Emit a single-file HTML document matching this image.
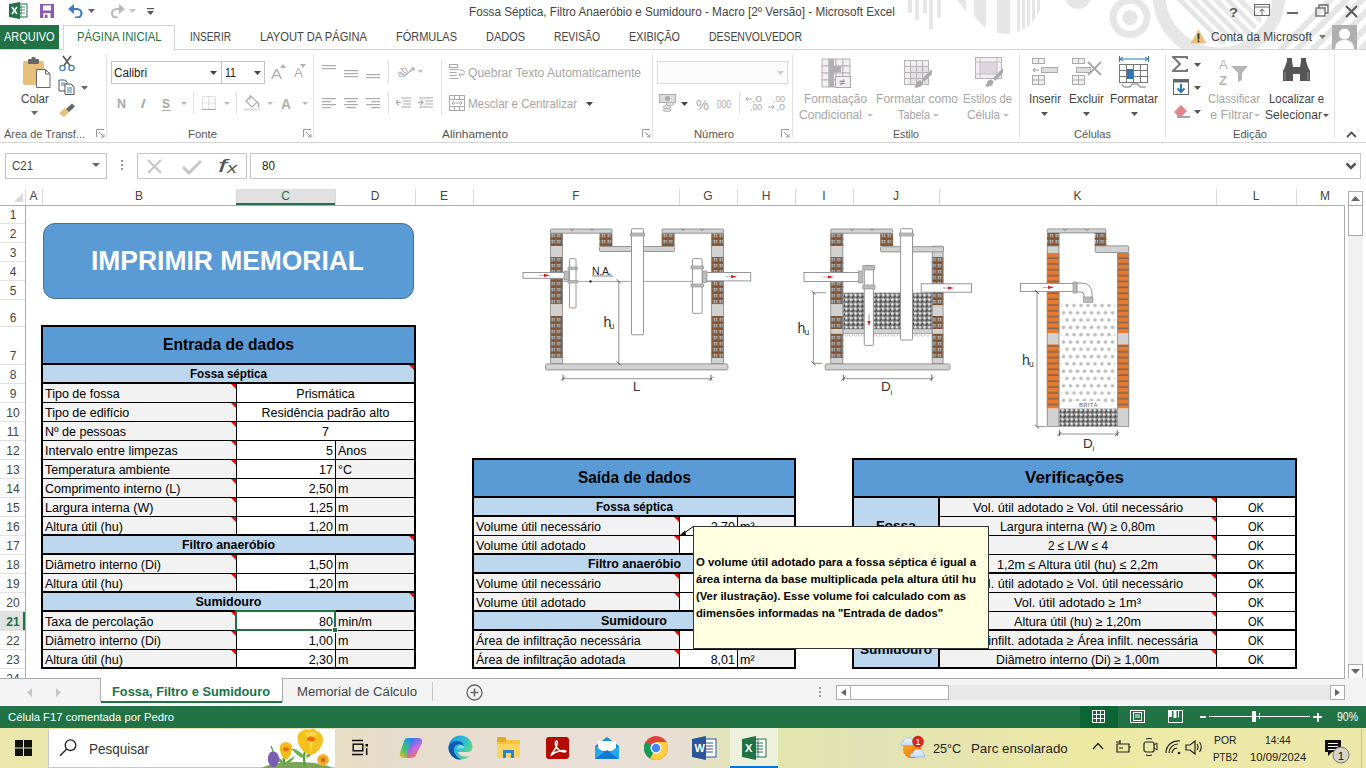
<!DOCTYPE html>
<html><head><meta charset="utf-8"><style>
*{margin:0;padding:0}
html,body{width:1366px;height:768px;overflow:hidden;background:#fff}
body{position:relative;font-family:"Liberation Sans",sans-serif}
.t{position:absolute;white-space:nowrap}
.r{position:absolute;display:block}
</style></head><body>
<div class="r" style="left:0px;top:189px;width:1366px;height:16px;background:#fff;"></div>
<svg class="r" style="left:14px;top:193px;" width="9" height="9" viewBox="0 0 9 9"><polygon points="9,0 9,9 0,9" fill="#d9d9d9"/></svg>
<div class="r" style="left:236px;top:189px;width:99px;height:16px;background:#e1e1e1;"></div>
<div class="r" style="left:42px;top:189px;width:1px;height:16px;background:#dadada;"></div>
<div class="t" style="left:29.50px;top:190.44px;font-size:12px;line-height:13.800px;color:#444;">A</div>
<div class="r" style="left:236px;top:189px;width:1px;height:16px;background:#dadada;"></div>
<div class="t" style="left:135.00px;top:190.44px;font-size:12px;line-height:13.800px;color:#444;">B</div>
<div class="r" style="left:335px;top:189px;width:1px;height:16px;background:#dadada;"></div>
<div class="t" style="left:281.17px;top:190.44px;font-size:12px;line-height:13.800px;color:#217346;">C</div>
<div class="r" style="left:415px;top:189px;width:1px;height:16px;background:#dadada;"></div>
<div class="t" style="left:370.67px;top:190.44px;font-size:12px;line-height:13.800px;color:#444;">D</div>
<div class="r" style="left:473px;top:189px;width:1px;height:16px;background:#dadada;"></div>
<div class="t" style="left:440.00px;top:190.44px;font-size:12px;line-height:13.800px;color:#444;">E</div>
<div class="r" style="left:679px;top:189px;width:1px;height:16px;background:#dadada;"></div>
<div class="t" style="left:572.33px;top:190.44px;font-size:12px;line-height:13.800px;color:#444;">F</div>
<div class="r" style="left:737px;top:189px;width:1px;height:16px;background:#dadada;"></div>
<div class="t" style="left:703.33px;top:190.44px;font-size:12px;line-height:13.800px;color:#444;">G</div>
<div class="r" style="left:795px;top:189px;width:1px;height:16px;background:#dadada;"></div>
<div class="t" style="left:761.67px;top:190.44px;font-size:12px;line-height:13.800px;color:#444;">H</div>
<div class="r" style="left:853px;top:189px;width:1px;height:16px;background:#dadada;"></div>
<div class="t" style="left:822.33px;top:190.44px;font-size:12px;line-height:13.800px;color:#444;">I</div>
<div class="r" style="left:939px;top:189px;width:1px;height:16px;background:#dadada;"></div>
<div class="t" style="left:893.00px;top:190.44px;font-size:12px;line-height:13.800px;color:#444;">J</div>
<div class="r" style="left:1216px;top:189px;width:1px;height:16px;background:#dadada;"></div>
<div class="t" style="left:1073.50px;top:190.44px;font-size:12px;line-height:13.800px;color:#444;">K</div>
<div class="r" style="left:1296px;top:189px;width:1px;height:16px;background:#dadada;"></div>
<div class="t" style="left:1252.66px;top:190.44px;font-size:12px;line-height:13.800px;color:#444;">L</div>
<div class="t" style="left:1320.00px;top:190.44px;font-size:12px;line-height:13.800px;color:#444;">M</div>
<div class="r" style="left:25px;top:189px;width:1px;height:16px;background:#dadada;"></div>
<div class="r" style="left:0px;top:205px;width:1345px;height:1px;background:#ababab;"></div>
<div class="r" style="left:236px;top:203px;width:99px;height:2px;background:#217346;"></div>
<div class="r" style="left:25px;top:205px;width:1px;height:473px;background:#ababab;"></div>
<div class="r" style="left:0px;top:611px;width:25px;height:19px;background:#e1e1e1;"></div>
<div class="r" style="left:23px;top:611px;width:2px;height:19px;background:#217346;"></div>
<div class="r" style="left:0px;top:223px;width:25px;height:1px;background:#e1e1e1;"></div>
<div class="t" style="left:9.66px;top:208.94px;font-size:12px;line-height:13.800px;color:#444;">1</div>
<div class="r" style="left:0px;top:242px;width:25px;height:1px;background:#e1e1e1;"></div>
<div class="t" style="left:9.66px;top:227.94px;font-size:12px;line-height:13.800px;color:#444;">2</div>
<div class="r" style="left:0px;top:261px;width:25px;height:1px;background:#e1e1e1;"></div>
<div class="t" style="left:9.66px;top:246.94px;font-size:12px;line-height:13.800px;color:#444;">3</div>
<div class="r" style="left:0px;top:280px;width:25px;height:1px;background:#e1e1e1;"></div>
<div class="t" style="left:9.66px;top:265.94px;font-size:12px;line-height:13.800px;color:#444;">4</div>
<div class="r" style="left:0px;top:299px;width:25px;height:1px;background:#e1e1e1;"></div>
<div class="t" style="left:9.66px;top:284.94px;font-size:12px;line-height:13.800px;color:#444;">5</div>
<div class="r" style="left:0px;top:326px;width:25px;height:1px;background:#e1e1e1;"></div>
<div class="t" style="left:9.66px;top:311.94px;font-size:12px;line-height:13.800px;color:#444;">6</div>
<div class="r" style="left:0px;top:364px;width:25px;height:1px;background:#e1e1e1;"></div>
<div class="t" style="left:9.66px;top:349.94px;font-size:12px;line-height:13.800px;color:#444;">7</div>
<div class="r" style="left:0px;top:383px;width:25px;height:1px;background:#e1e1e1;"></div>
<div class="t" style="left:9.66px;top:368.94px;font-size:12px;line-height:13.800px;color:#444;">8</div>
<div class="r" style="left:0px;top:402px;width:25px;height:1px;background:#e1e1e1;"></div>
<div class="t" style="left:9.66px;top:387.94px;font-size:12px;line-height:13.800px;color:#444;">9</div>
<div class="r" style="left:0px;top:421px;width:25px;height:1px;background:#e1e1e1;"></div>
<div class="t" style="left:6.33px;top:406.94px;font-size:12px;line-height:13.800px;color:#444;">10</div>
<div class="r" style="left:0px;top:440px;width:25px;height:1px;background:#e1e1e1;"></div>
<div class="t" style="left:6.77px;top:425.94px;font-size:12px;line-height:13.800px;color:#444;">11</div>
<div class="r" style="left:0px;top:459px;width:25px;height:1px;background:#e1e1e1;"></div>
<div class="t" style="left:6.33px;top:444.94px;font-size:12px;line-height:13.800px;color:#444;">12</div>
<div class="r" style="left:0px;top:478px;width:25px;height:1px;background:#e1e1e1;"></div>
<div class="t" style="left:6.33px;top:463.94px;font-size:12px;line-height:13.800px;color:#444;">13</div>
<div class="r" style="left:0px;top:497px;width:25px;height:1px;background:#e1e1e1;"></div>
<div class="t" style="left:6.33px;top:482.94px;font-size:12px;line-height:13.800px;color:#444;">14</div>
<div class="r" style="left:0px;top:516px;width:25px;height:1px;background:#e1e1e1;"></div>
<div class="t" style="left:6.33px;top:501.94px;font-size:12px;line-height:13.800px;color:#444;">15</div>
<div class="r" style="left:0px;top:535px;width:25px;height:1px;background:#e1e1e1;"></div>
<div class="t" style="left:6.33px;top:520.94px;font-size:12px;line-height:13.800px;color:#444;">16</div>
<div class="r" style="left:0px;top:554px;width:25px;height:1px;background:#e1e1e1;"></div>
<div class="t" style="left:6.33px;top:539.94px;font-size:12px;line-height:13.800px;color:#444;">17</div>
<div class="r" style="left:0px;top:573px;width:25px;height:1px;background:#e1e1e1;"></div>
<div class="t" style="left:6.33px;top:558.94px;font-size:12px;line-height:13.800px;color:#444;">18</div>
<div class="r" style="left:0px;top:592px;width:25px;height:1px;background:#e1e1e1;"></div>
<div class="t" style="left:6.33px;top:577.94px;font-size:12px;line-height:13.800px;color:#444;">19</div>
<div class="r" style="left:0px;top:611px;width:25px;height:1px;background:#e1e1e1;"></div>
<div class="t" style="left:6.33px;top:596.94px;font-size:12px;line-height:13.800px;color:#444;">20</div>
<div class="r" style="left:0px;top:630px;width:25px;height:1px;background:#e1e1e1;"></div>
<div class="t" style="left:6.33px;top:615.94px;font-size:12px;line-height:13.800px;color:#217346;font-weight:bold;">21</div>
<div class="r" style="left:0px;top:649px;width:25px;height:1px;background:#e1e1e1;"></div>
<div class="t" style="left:6.33px;top:634.94px;font-size:12px;line-height:13.800px;color:#444;">22</div>
<div class="r" style="left:0px;top:668px;width:25px;height:1px;background:#e1e1e1;"></div>
<div class="t" style="left:6.33px;top:653.94px;font-size:12px;line-height:13.800px;color:#444;">23</div>
<div class="r" style="left:0px;top:687px;width:25px;height:1px;background:#e1e1e1;"></div>
<div class="t" style="left:6.33px;top:672.94px;font-size:12px;line-height:13.800px;color:#444;">24</div>
<div class="r" style="left:43px;top:223px;width:371px;height:76px;background:#5b9bd5;border:1px solid #41719c;box-sizing:border-box;border-radius:12px;"></div>
<div class="t" style="left:91.00px;top:246.12px;font-size:27px;line-height:31.050px;color:#fff;font-weight:bold;transform:scaleX(0.9786);transform-origin:0 0;">IMPRIMIR MEMORIAL</div>
<div class="r" style="left:42px;top:326px;width:373px;height:38px;background:#5b9bd5;"></div>
<div class="t" style="left:163.00px;top:336.26px;font-size:16px;line-height:18.400px;color:#000;font-weight:bold;transform:scaleX(0.9758);transform-origin:0 0;">Entrada de dados</div>
<div class="r" style="left:42px;top:364px;width:373px;height:19px;background:#bdd7ee;"></div>
<div class="t" style="left:190.00px;top:366.98px;font-size:12.5px;line-height:14.375px;color:#000;font-weight:bold;transform:scaleX(0.9314);transform-origin:0 0;">Fossa séptica</div>
<svg class="r" style="left:409px;top:365px;" width="5" height="5" viewBox="0 0 5 5"><polygon points="0,0 5,0 5,5" fill="#ff0000"/></svg>
<div class="r" style="left:42px;top:535px;width:373px;height:19px;background:#bdd7ee;"></div>
<div class="t" style="left:182.00px;top:537.98px;font-size:12.5px;line-height:14.375px;color:#000;font-weight:bold;transform:scaleX(0.9847);transform-origin:0 0;">Filtro anaeróbio</div>
<svg class="r" style="left:409px;top:536px;" width="5" height="5" viewBox="0 0 5 5"><polygon points="0,0 5,0 5,5" fill="#ff0000"/></svg>
<div class="r" style="left:42px;top:592px;width:373px;height:19px;background:#bdd7ee;"></div>
<div class="t" style="left:195.50px;top:594.98px;font-size:12.5px;line-height:14.375px;color:#000;font-weight:bold;">Sumidouro</div>
<svg class="r" style="left:409px;top:593px;" width="5" height="5" viewBox="0 0 5 5"><polygon points="0,0 5,0 5,5" fill="#ff0000"/></svg>
<div class="r" style="left:42px;top:383px;width:194px;height:19px;background:#f2f2f2;"></div>
<div class="t" style="left:45.00px;top:386.98px;font-size:12.5px;line-height:14.375px;color:#000;">Tipo de fossa</div>
<div class="t" style="left:296.33px;top:386.98px;font-size:12.5px;line-height:14.375px;color:#000;">Prismática</div>
<div class="r" style="left:42px;top:402px;width:194px;height:19px;background:#f2f2f2;"></div>
<div class="t" style="left:45.00px;top:405.98px;font-size:12.5px;line-height:14.375px;color:#000;">Tipo de edifício</div>
<div class="t" style="left:261.57px;top:405.98px;font-size:12.5px;line-height:14.375px;color:#000;">Residência padrão alto</div>
<div class="r" style="left:42px;top:421px;width:194px;height:19px;background:#f2f2f2;"></div>
<div class="t" style="left:45.00px;top:424.98px;font-size:12.5px;line-height:14.375px;color:#000;">Nº de pessoas</div>
<div class="t" style="left:322.02px;top:424.98px;font-size:12.5px;line-height:14.375px;color:#000;">7</div>
<div class="r" style="left:42px;top:440px;width:194px;height:19px;background:#f2f2f2;"></div>
<div class="t" style="left:45.00px;top:443.98px;font-size:12.5px;line-height:14.375px;color:#000;">Intervalo entre limpezas</div>
<div class="r" style="left:335px;top:440px;width:80px;height:19px;background:#f2f2f2;"></div>
<div class="t" style="left:326.05px;top:443.98px;font-size:12.5px;line-height:14.375px;color:#000;">5</div>
<div class="t" style="left:338.00px;top:443.98px;font-size:12.5px;line-height:14.375px;color:#000;">Anos</div>
<div class="r" style="left:42px;top:459px;width:194px;height:19px;background:#f2f2f2;"></div>
<div class="t" style="left:45.00px;top:462.98px;font-size:12.5px;line-height:14.375px;color:#000;">Temperatura ambiente</div>
<div class="r" style="left:335px;top:459px;width:80px;height:19px;background:#f2f2f2;"></div>
<div class="t" style="left:319.10px;top:462.98px;font-size:12.5px;line-height:14.375px;color:#000;">17</div>
<div class="t" style="left:338.00px;top:462.98px;font-size:12.5px;line-height:14.375px;color:#000;">°C</div>
<div class="r" style="left:42px;top:478px;width:194px;height:19px;background:#f2f2f2;"></div>
<div class="t" style="left:45.00px;top:481.98px;font-size:12.5px;line-height:14.375px;color:#000;">Comprimento interno (L)</div>
<div class="r" style="left:335px;top:478px;width:80px;height:19px;background:#f2f2f2;"></div>
<div class="t" style="left:308.67px;top:481.98px;font-size:12.5px;line-height:14.375px;color:#000;">2,50</div>
<div class="t" style="left:338.00px;top:481.98px;font-size:12.5px;line-height:14.375px;color:#000;">m</div>
<div class="r" style="left:42px;top:497px;width:194px;height:19px;background:#f2f2f2;"></div>
<div class="t" style="left:45.00px;top:500.98px;font-size:12.5px;line-height:14.375px;color:#000;">Largura interna (W)</div>
<div class="r" style="left:335px;top:497px;width:80px;height:19px;background:#f2f2f2;"></div>
<div class="t" style="left:308.67px;top:500.98px;font-size:12.5px;line-height:14.375px;color:#000;">1,25</div>
<div class="t" style="left:338.00px;top:500.98px;font-size:12.5px;line-height:14.375px;color:#000;">m</div>
<div class="r" style="left:42px;top:516px;width:194px;height:19px;background:#f2f2f2;"></div>
<div class="t" style="left:45.00px;top:519.98px;font-size:12.5px;line-height:14.375px;color:#000;">Altura útil (hu)</div>
<div class="r" style="left:335px;top:516px;width:80px;height:19px;background:#f2f2f2;"></div>
<div class="t" style="left:308.67px;top:519.98px;font-size:12.5px;line-height:14.375px;color:#000;">1,20</div>
<div class="t" style="left:338.00px;top:519.98px;font-size:12.5px;line-height:14.375px;color:#000;">m</div>
<div class="r" style="left:42px;top:554px;width:194px;height:19px;background:#f2f2f2;"></div>
<div class="t" style="left:45.00px;top:557.98px;font-size:12.5px;line-height:14.375px;color:#000;">Diâmetro interno (Di)</div>
<div class="r" style="left:335px;top:554px;width:80px;height:19px;background:#f2f2f2;"></div>
<div class="t" style="left:308.67px;top:557.98px;font-size:12.5px;line-height:14.375px;color:#000;">1,50</div>
<div class="t" style="left:338.00px;top:557.98px;font-size:12.5px;line-height:14.375px;color:#000;">m</div>
<div class="r" style="left:42px;top:573px;width:194px;height:19px;background:#f2f2f2;"></div>
<div class="t" style="left:45.00px;top:576.98px;font-size:12.5px;line-height:14.375px;color:#000;">Altura útil (hu)</div>
<div class="r" style="left:335px;top:573px;width:80px;height:19px;background:#f2f2f2;"></div>
<div class="t" style="left:308.67px;top:576.98px;font-size:12.5px;line-height:14.375px;color:#000;">1,20</div>
<div class="t" style="left:338.00px;top:576.98px;font-size:12.5px;line-height:14.375px;color:#000;">m</div>
<div class="r" style="left:42px;top:611px;width:194px;height:19px;background:#f2f2f2;"></div>
<div class="t" style="left:45.00px;top:614.98px;font-size:12.5px;line-height:14.375px;color:#000;">Taxa de percolação</div>
<div class="r" style="left:335px;top:611px;width:80px;height:19px;background:#f2f2f2;"></div>
<div class="t" style="left:319.10px;top:614.98px;font-size:12.5px;line-height:14.375px;color:#000;">80</div>
<div class="t" style="left:338.00px;top:614.98px;font-size:12.5px;line-height:14.375px;color:#000;">min/m</div>
<div class="r" style="left:42px;top:630px;width:194px;height:19px;background:#f2f2f2;"></div>
<div class="t" style="left:45.00px;top:633.98px;font-size:12.5px;line-height:14.375px;color:#000;">Diâmetro interno (Di)</div>
<div class="r" style="left:335px;top:630px;width:80px;height:19px;background:#f2f2f2;"></div>
<div class="t" style="left:308.67px;top:633.98px;font-size:12.5px;line-height:14.375px;color:#000;">1,00</div>
<div class="t" style="left:338.00px;top:633.98px;font-size:12.5px;line-height:14.375px;color:#000;">m</div>
<div class="r" style="left:42px;top:649px;width:194px;height:19px;background:#f2f2f2;"></div>
<div class="t" style="left:45.00px;top:652.98px;font-size:12.5px;line-height:14.375px;color:#000;">Altura útil (hu)</div>
<div class="r" style="left:335px;top:649px;width:80px;height:19px;background:#f2f2f2;"></div>
<div class="t" style="left:308.67px;top:652.98px;font-size:12.5px;line-height:14.375px;color:#000;">2,30</div>
<div class="t" style="left:338.00px;top:652.98px;font-size:12.5px;line-height:14.375px;color:#000;">m</div>
<svg class="r" style="left:231px;top:384px;" width="5" height="5" viewBox="0 0 5 5"><polygon points="0,0 5,0 5,5" fill="#ff0000"/></svg>
<svg class="r" style="left:231px;top:403px;" width="5" height="5" viewBox="0 0 5 5"><polygon points="0,0 5,0 5,5" fill="#ff0000"/></svg>
<svg class="r" style="left:231px;top:422px;" width="5" height="5" viewBox="0 0 5 5"><polygon points="0,0 5,0 5,5" fill="#ff0000"/></svg>
<svg class="r" style="left:231px;top:441px;" width="5" height="5" viewBox="0 0 5 5"><polygon points="0,0 5,0 5,5" fill="#ff0000"/></svg>
<svg class="r" style="left:231px;top:460px;" width="5" height="5" viewBox="0 0 5 5"><polygon points="0,0 5,0 5,5" fill="#ff0000"/></svg>
<svg class="r" style="left:231px;top:479px;" width="5" height="5" viewBox="0 0 5 5"><polygon points="0,0 5,0 5,5" fill="#ff0000"/></svg>
<svg class="r" style="left:231px;top:498px;" width="5" height="5" viewBox="0 0 5 5"><polygon points="0,0 5,0 5,5" fill="#ff0000"/></svg>
<svg class="r" style="left:231px;top:517px;" width="5" height="5" viewBox="0 0 5 5"><polygon points="0,0 5,0 5,5" fill="#ff0000"/></svg>
<svg class="r" style="left:231px;top:555px;" width="5" height="5" viewBox="0 0 5 5"><polygon points="0,0 5,0 5,5" fill="#ff0000"/></svg>
<svg class="r" style="left:231px;top:574px;" width="5" height="5" viewBox="0 0 5 5"><polygon points="0,0 5,0 5,5" fill="#ff0000"/></svg>
<svg class="r" style="left:231px;top:612px;" width="5" height="5" viewBox="0 0 5 5"><polygon points="0,0 5,0 5,5" fill="#ff0000"/></svg>
<svg class="r" style="left:231px;top:631px;" width="5" height="5" viewBox="0 0 5 5"><polygon points="0,0 5,0 5,5" fill="#ff0000"/></svg>
<svg class="r" style="left:231px;top:650px;" width="5" height="5" viewBox="0 0 5 5"><polygon points="0,0 5,0 5,5" fill="#ff0000"/></svg>
<div class="r" style="left:236px;top:383px;width:1px;height:19px;background:#000;"></div>
<div class="r" style="left:236px;top:402px;width:1px;height:19px;background:#000;"></div>
<div class="r" style="left:236px;top:421px;width:1px;height:19px;background:#000;"></div>
<div class="r" style="left:335px;top:440px;width:1px;height:19px;background:#000;"></div>
<div class="r" style="left:236px;top:440px;width:1px;height:19px;background:#000;"></div>
<div class="r" style="left:335px;top:459px;width:1px;height:19px;background:#000;"></div>
<div class="r" style="left:236px;top:459px;width:1px;height:19px;background:#000;"></div>
<div class="r" style="left:335px;top:478px;width:1px;height:19px;background:#000;"></div>
<div class="r" style="left:236px;top:478px;width:1px;height:19px;background:#000;"></div>
<div class="r" style="left:335px;top:497px;width:1px;height:19px;background:#000;"></div>
<div class="r" style="left:236px;top:497px;width:1px;height:19px;background:#000;"></div>
<div class="r" style="left:335px;top:516px;width:1px;height:19px;background:#000;"></div>
<div class="r" style="left:236px;top:516px;width:1px;height:19px;background:#000;"></div>
<div class="r" style="left:335px;top:554px;width:1px;height:19px;background:#000;"></div>
<div class="r" style="left:236px;top:554px;width:1px;height:19px;background:#000;"></div>
<div class="r" style="left:335px;top:573px;width:1px;height:19px;background:#000;"></div>
<div class="r" style="left:236px;top:573px;width:1px;height:19px;background:#000;"></div>
<div class="r" style="left:335px;top:611px;width:1px;height:19px;background:#000;"></div>
<div class="r" style="left:236px;top:611px;width:1px;height:19px;background:#000;"></div>
<div class="r" style="left:335px;top:630px;width:1px;height:19px;background:#000;"></div>
<div class="r" style="left:236px;top:630px;width:1px;height:19px;background:#000;"></div>
<div class="r" style="left:335px;top:649px;width:1px;height:19px;background:#000;"></div>
<div class="r" style="left:236px;top:649px;width:1px;height:19px;background:#000;"></div>
<div class="r" style="left:42px;top:402px;width:373px;height:1px;background:#000;"></div>
<div class="r" style="left:42px;top:421px;width:373px;height:1px;background:#000;"></div>
<div class="r" style="left:42px;top:440px;width:373px;height:1px;background:#000;"></div>
<div class="r" style="left:42px;top:459px;width:373px;height:1px;background:#000;"></div>
<div class="r" style="left:42px;top:478px;width:373px;height:1px;background:#000;"></div>
<div class="r" style="left:42px;top:497px;width:373px;height:1px;background:#000;"></div>
<div class="r" style="left:42px;top:516px;width:373px;height:1px;background:#000;"></div>
<div class="r" style="left:42px;top:573px;width:373px;height:1px;background:#000;"></div>
<div class="r" style="left:42px;top:630px;width:373px;height:1px;background:#000;"></div>
<div class="r" style="left:42px;top:649px;width:373px;height:1px;background:#000;"></div>
<div class="r" style="left:41px;top:325px;width:375px;height:2px;background:#000;"></div>
<div class="r" style="left:41px;top:363px;width:375px;height:2px;background:#000;"></div>
<div class="r" style="left:41px;top:382px;width:375px;height:2px;background:#000;"></div>
<div class="r" style="left:41px;top:534px;width:375px;height:2px;background:#000;"></div>
<div class="r" style="left:41px;top:553px;width:375px;height:2px;background:#000;"></div>
<div class="r" style="left:41px;top:591px;width:375px;height:2px;background:#000;"></div>
<div class="r" style="left:41px;top:610px;width:375px;height:2px;background:#000;"></div>
<div class="r" style="left:41px;top:667px;width:375px;height:2px;background:#000;"></div>
<div class="r" style="left:41px;top:325px;width:2px;height:344px;background:#000;"></div>
<div class="r" style="left:414px;top:325px;width:2px;height:344px;background:#000;"></div>
<div class="r" style="left:235px;top:610px;width:101px;height:21px;border:2px solid #217346;box-sizing:border-box;"></div>
<div class="r" style="left:332px;top:627px;width:6px;height:6px;background:#217346;border:1px solid #fff;box-sizing:border-box;"></div>
<div class="r" style="left:473px;top:459px;width:322px;height:38px;background:#5b9bd5;"></div>
<div class="t" style="left:577.50px;top:469.26px;font-size:16px;line-height:18.400px;color:#000;font-weight:bold;transform:scaleX(0.9628);transform-origin:0 0;">Saída de dados</div>
<div class="r" style="left:473px;top:497px;width:322px;height:19px;background:#bdd7ee;"></div>
<div class="t" style="left:595.50px;top:499.98px;font-size:12.5px;line-height:14.375px;color:#000;font-weight:bold;transform:scaleX(0.9314);transform-origin:0 0;">Fossa séptica</div>
<div class="r" style="left:473px;top:554px;width:322px;height:19px;background:#bdd7ee;"></div>
<div class="t" style="left:587.50px;top:556.98px;font-size:12.5px;line-height:14.375px;color:#000;font-weight:bold;transform:scaleX(0.9847);transform-origin:0 0;">Filtro anaeróbio</div>
<div class="r" style="left:473px;top:611px;width:322px;height:19px;background:#bdd7ee;"></div>
<div class="t" style="left:601.00px;top:613.98px;font-size:12.5px;line-height:14.375px;color:#000;font-weight:bold;">Sumidouro</div>
<div class="r" style="left:473px;top:516px;width:206px;height:19px;background:#f2f2f2;"></div>
<div class="r" style="left:737px;top:516px;width:58px;height:19px;background:#f2f2f2;"></div>
<div class="t" style="left:476.00px;top:519.98px;font-size:12.5px;line-height:14.375px;color:#000;">Volume útil necessário</div>
<div class="t" style="left:710.67px;top:519.98px;font-size:12.5px;line-height:14.375px;color:#000;">2,70</div>
<div class="t" style="left:740.00px;top:519.98px;font-size:12.5px;line-height:14.375px;color:#000;">m³</div>
<svg class="r" style="left:674px;top:517px;" width="5" height="5" viewBox="0 0 5 5"><polygon points="0,0 5,0 5,5" fill="#ff0000"/></svg>
<div class="r" style="left:473px;top:535px;width:206px;height:19px;background:#f2f2f2;"></div>
<div class="r" style="left:737px;top:535px;width:58px;height:19px;background:#f2f2f2;"></div>
<div class="t" style="left:476.00px;top:538.98px;font-size:12.5px;line-height:14.375px;color:#000;">Volume útil adotado</div>
<div class="t" style="left:710.67px;top:538.98px;font-size:12.5px;line-height:14.375px;color:#000;">3,75</div>
<div class="t" style="left:740.00px;top:538.98px;font-size:12.5px;line-height:14.375px;color:#000;">m³</div>
<svg class="r" style="left:674px;top:536px;" width="5" height="5" viewBox="0 0 5 5"><polygon points="0,0 5,0 5,5" fill="#ff0000"/></svg>
<div class="r" style="left:473px;top:573px;width:206px;height:19px;background:#f2f2f2;"></div>
<div class="r" style="left:737px;top:573px;width:58px;height:19px;background:#f2f2f2;"></div>
<div class="t" style="left:476.00px;top:576.98px;font-size:12.5px;line-height:14.375px;color:#000;">Volume útil necessário</div>
<svg class="r" style="left:674px;top:574px;" width="5" height="5" viewBox="0 0 5 5"><polygon points="0,0 5,0 5,5" fill="#ff0000"/></svg>
<div class="r" style="left:473px;top:592px;width:206px;height:19px;background:#f2f2f2;"></div>
<div class="r" style="left:737px;top:592px;width:58px;height:19px;background:#f2f2f2;"></div>
<div class="t" style="left:476.00px;top:595.98px;font-size:12.5px;line-height:14.375px;color:#000;">Volume útil adotado</div>
<svg class="r" style="left:674px;top:593px;" width="5" height="5" viewBox="0 0 5 5"><polygon points="0,0 5,0 5,5" fill="#ff0000"/></svg>
<div class="r" style="left:473px;top:630px;width:206px;height:19px;background:#f2f2f2;"></div>
<div class="r" style="left:737px;top:630px;width:58px;height:19px;background:#f2f2f2;"></div>
<div class="t" style="left:476.00px;top:633.98px;font-size:12.5px;line-height:14.375px;color:#000;">Área de infiltração necessária</div>
<svg class="r" style="left:674px;top:631px;" width="5" height="5" viewBox="0 0 5 5"><polygon points="0,0 5,0 5,5" fill="#ff0000"/></svg>
<div class="r" style="left:473px;top:649px;width:206px;height:19px;background:#f2f2f2;"></div>
<div class="r" style="left:737px;top:649px;width:58px;height:19px;background:#f2f2f2;"></div>
<div class="t" style="left:476.00px;top:652.98px;font-size:12.5px;line-height:14.375px;color:#000;">Área de infiltração adotada</div>
<div class="t" style="left:710.67px;top:652.98px;font-size:12.5px;line-height:14.375px;color:#000;">8,01</div>
<div class="t" style="left:740.00px;top:652.98px;font-size:12.5px;line-height:14.375px;color:#000;">m²</div>
<svg class="r" style="left:674px;top:650px;" width="5" height="5" viewBox="0 0 5 5"><polygon points="0,0 5,0 5,5" fill="#ff0000"/></svg>
<div class="r" style="left:853px;top:459px;width:443px;height:38px;background:#5b9bd5;"></div>
<div class="t" style="left:1025.00px;top:469.26px;font-size:16px;line-height:18.400px;color:#000;font-weight:bold;transform:scaleX(1.0600);transform-origin:0 0;">Verificações</div>
<div class="r" style="left:853px;top:497px;width:86px;height:171px;background:#bdd7ee;"></div>
<div class="r" style="left:939px;top:497px;width:277px;height:19px;background:#f2f2f2;"></div>
<div class="t" style="left:972.50px;top:500.98px;font-size:12.5px;line-height:14.375px;color:#000;transform:scaleX(1.0146);transform-origin:0 0;">Vol. útil adotado ≥ Vol. útil necessário</div>
<div class="t" style="left:1248.00px;top:500.98px;font-size:12.5px;line-height:14.375px;color:#000;transform:scaleX(0.8859);transform-origin:0 0;">OK</div>
<svg class="r" style="left:1211px;top:498px;" width="5" height="5" viewBox="0 0 5 5"><polygon points="0,0 5,0 5,5" fill="#ff0000"/></svg>
<div class="r" style="left:939px;top:516px;width:277px;height:19px;background:#f2f2f2;"></div>
<div class="t" style="left:1000.00px;top:519.98px;font-size:12.5px;line-height:14.375px;color:#000;transform:scaleX(0.9878);transform-origin:0 0;">Largura interna (W) ≥ 0,80m</div>
<div class="t" style="left:1248.00px;top:519.98px;font-size:12.5px;line-height:14.375px;color:#000;transform:scaleX(0.8859);transform-origin:0 0;">OK</div>
<svg class="r" style="left:1211px;top:517px;" width="5" height="5" viewBox="0 0 5 5"><polygon points="0,0 5,0 5,5" fill="#ff0000"/></svg>
<div class="r" style="left:939px;top:535px;width:277px;height:19px;background:#f2f2f2;"></div>
<div class="t" style="left:1047.50px;top:538.98px;font-size:12.5px;line-height:14.375px;color:#000;transform:scaleX(0.9414);transform-origin:0 0;">2 ≤ L/W ≤ 4</div>
<div class="t" style="left:1248.00px;top:538.98px;font-size:12.5px;line-height:14.375px;color:#000;transform:scaleX(0.8859);transform-origin:0 0;">OK</div>
<svg class="r" style="left:1211px;top:536px;" width="5" height="5" viewBox="0 0 5 5"><polygon points="0,0 5,0 5,5" fill="#ff0000"/></svg>
<div class="r" style="left:939px;top:554px;width:277px;height:19px;background:#f2f2f2;"></div>
<div class="t" style="left:997.00px;top:557.98px;font-size:12.5px;line-height:14.375px;color:#000;transform:scaleX(1.0043);transform-origin:0 0;">1,2m ≤ Altura útil (hu) ≤ 2,2m</div>
<div class="t" style="left:1248.00px;top:557.98px;font-size:12.5px;line-height:14.375px;color:#000;transform:scaleX(0.8859);transform-origin:0 0;">OK</div>
<svg class="r" style="left:1211px;top:555px;" width="5" height="5" viewBox="0 0 5 5"><polygon points="0,0 5,0 5,5" fill="#ff0000"/></svg>
<div class="r" style="left:939px;top:573px;width:277px;height:19px;background:#f2f2f2;"></div>
<div class="t" style="left:972.50px;top:576.98px;font-size:12.5px;line-height:14.375px;color:#000;transform:scaleX(1.0146);transform-origin:0 0;">Vol. útil adotado ≥ Vol. útil necessário</div>
<div class="t" style="left:1248.00px;top:576.98px;font-size:12.5px;line-height:14.375px;color:#000;transform:scaleX(0.8859);transform-origin:0 0;">OK</div>
<svg class="r" style="left:1211px;top:574px;" width="5" height="5" viewBox="0 0 5 5"><polygon points="0,0 5,0 5,5" fill="#ff0000"/></svg>
<div class="r" style="left:939px;top:592px;width:277px;height:19px;background:#f2f2f2;"></div>
<div class="t" style="left:1014.00px;top:595.98px;font-size:12.5px;line-height:14.375px;color:#000;transform:scaleX(1.0218);transform-origin:0 0;">Vol. útil adotado ≥ 1m³</div>
<div class="t" style="left:1248.00px;top:595.98px;font-size:12.5px;line-height:14.375px;color:#000;transform:scaleX(0.8859);transform-origin:0 0;">OK</div>
<svg class="r" style="left:1211px;top:593px;" width="5" height="5" viewBox="0 0 5 5"><polygon points="0,0 5,0 5,5" fill="#ff0000"/></svg>
<div class="r" style="left:939px;top:611px;width:277px;height:19px;background:#f2f2f2;"></div>
<div class="t" style="left:1014.00px;top:614.98px;font-size:12.5px;line-height:14.375px;color:#000;transform:scaleX(1.0051);transform-origin:0 0;">Altura útil (hu) ≥ 1,20m</div>
<div class="t" style="left:1248.00px;top:614.98px;font-size:12.5px;line-height:14.375px;color:#000;transform:scaleX(0.8859);transform-origin:0 0;">OK</div>
<svg class="r" style="left:1211px;top:612px;" width="5" height="5" viewBox="0 0 5 5"><polygon points="0,0 5,0 5,5" fill="#ff0000"/></svg>
<div class="r" style="left:939px;top:630px;width:277px;height:19px;background:#f2f2f2;"></div>
<div class="t" style="left:957.50px;top:633.98px;font-size:12.5px;line-height:14.375px;color:#000;transform:scaleX(1.0104);transform-origin:0 0;">Área infilt. adotada ≥ Área infilt. necessária</div>
<div class="t" style="left:1248.00px;top:633.98px;font-size:12.5px;line-height:14.375px;color:#000;transform:scaleX(0.8859);transform-origin:0 0;">OK</div>
<svg class="r" style="left:1211px;top:631px;" width="5" height="5" viewBox="0 0 5 5"><polygon points="0,0 5,0 5,5" fill="#ff0000"/></svg>
<div class="r" style="left:939px;top:649px;width:277px;height:19px;background:#f2f2f2;"></div>
<div class="t" style="left:996.00px;top:652.98px;font-size:12.5px;line-height:14.375px;color:#000;transform:scaleX(0.9906);transform-origin:0 0;">Diâmetro interno (Di) ≥ 1,00m</div>
<div class="t" style="left:1248.00px;top:652.98px;font-size:12.5px;line-height:14.375px;color:#000;transform:scaleX(0.8859);transform-origin:0 0;">OK</div>
<svg class="r" style="left:1211px;top:650px;" width="5" height="5" viewBox="0 0 5 5"><polygon points="0,0 5,0 5,5" fill="#ff0000"/></svg>
<div class="t" style="left:876.00px;top:519.48px;font-size:12.5px;line-height:14.375px;color:#000;font-weight:bold;transform:scaleX(1.1073);transform-origin:0 0;">Fossa</div>
<div class="t" style="left:874.46px;top:536.48px;font-size:12.5px;line-height:14.375px;color:#000;font-weight:bold;">séptica</div>
<div class="t" style="left:880.38px;top:585.98px;font-size:12.5px;line-height:14.375px;color:#000;font-weight:bold;">Filtro</div>
<div class="t" style="left:866.13px;top:604.98px;font-size:12.5px;line-height:14.375px;color:#000;font-weight:bold;">anaeróbio</div>
<div class="t" style="left:860.00px;top:643.48px;font-size:12.5px;line-height:14.375px;color:#000;font-weight:bold;transform:scaleX(1.0915);transform-origin:0 0;">Sumidouro</div>
<div class="r" style="left:679px;top:516px;width:1px;height:19px;background:#000;"></div>
<div class="r" style="left:737px;top:516px;width:1px;height:19px;background:#000;"></div>
<div class="r" style="left:679px;top:535px;width:1px;height:19px;background:#000;"></div>
<div class="r" style="left:737px;top:535px;width:1px;height:19px;background:#000;"></div>
<div class="r" style="left:679px;top:573px;width:1px;height:19px;background:#000;"></div>
<div class="r" style="left:737px;top:573px;width:1px;height:19px;background:#000;"></div>
<div class="r" style="left:679px;top:592px;width:1px;height:19px;background:#000;"></div>
<div class="r" style="left:737px;top:592px;width:1px;height:19px;background:#000;"></div>
<div class="r" style="left:679px;top:630px;width:1px;height:19px;background:#000;"></div>
<div class="r" style="left:737px;top:630px;width:1px;height:19px;background:#000;"></div>
<div class="r" style="left:679px;top:649px;width:1px;height:19px;background:#000;"></div>
<div class="r" style="left:737px;top:649px;width:1px;height:19px;background:#000;"></div>
<div class="r" style="left:473px;top:535px;width:322px;height:1px;background:#000;"></div>
<div class="r" style="left:473px;top:592px;width:322px;height:1px;background:#000;"></div>
<div class="r" style="left:473px;top:649px;width:322px;height:1px;background:#000;"></div>
<div class="r" style="left:472px;top:458px;width:324px;height:2px;background:#000;"></div>
<div class="r" style="left:472px;top:496px;width:324px;height:2px;background:#000;"></div>
<div class="r" style="left:472px;top:515px;width:324px;height:2px;background:#000;"></div>
<div class="r" style="left:472px;top:553px;width:324px;height:2px;background:#000;"></div>
<div class="r" style="left:472px;top:572px;width:324px;height:2px;background:#000;"></div>
<div class="r" style="left:472px;top:610px;width:324px;height:2px;background:#000;"></div>
<div class="r" style="left:472px;top:629px;width:324px;height:2px;background:#000;"></div>
<div class="r" style="left:472px;top:667px;width:324px;height:2px;background:#000;"></div>
<div class="r" style="left:472px;top:458px;width:2px;height:211px;background:#000;"></div>
<div class="r" style="left:794px;top:458px;width:2px;height:211px;background:#000;"></div>
<div class="r" style="left:939px;top:516px;width:357px;height:1px;background:#000;"></div>
<div class="r" style="left:939px;top:535px;width:357px;height:1px;background:#000;"></div>
<div class="r" style="left:939px;top:554px;width:357px;height:1px;background:#000;"></div>
<div class="r" style="left:939px;top:592px;width:357px;height:1px;background:#000;"></div>
<div class="r" style="left:939px;top:611px;width:357px;height:1px;background:#000;"></div>
<div class="r" style="left:939px;top:649px;width:357px;height:1px;background:#000;"></div>
<div class="r" style="left:1216px;top:497px;width:1px;height:171px;background:#000;"></div>
<div class="r" style="left:852px;top:458px;width:445px;height:2px;background:#000;"></div>
<div class="r" style="left:852px;top:496px;width:445px;height:2px;background:#000;"></div>
<div class="r" style="left:852px;top:572px;width:445px;height:2px;background:#000;"></div>
<div class="r" style="left:852px;top:629px;width:445px;height:2px;background:#000;"></div>
<div class="r" style="left:852px;top:667px;width:445px;height:2px;background:#000;"></div>
<div class="r" style="left:852px;top:458px;width:2px;height:211px;background:#000;"></div>
<div class="r" style="left:1295px;top:458px;width:2px;height:211px;background:#000;"></div>
<div class="r" style="left:938px;top:496px;width:2px;height:173px;background:#000;"></div>
<svg class="r" style="left:679px;top:524px;" width="16" height="14" viewBox="0 0 16 14"><line x1="15" y1="2" x2="3" y2="10.5" stroke="#000" stroke-width="1"/><polygon points="0,12 6,6.5 7,11" fill="#000"/></svg>
<div class="r" style="left:693px;top:526px;width:296px;height:123px;background:#ffffe1;border:1px solid #333;box-sizing:border-box;"></div>
<div class="t" style="left:696.00px;top:555.90px;font-size:11.5px;line-height:13.225px;color:#000;font-weight:bold;transform:scaleX(0.9890);transform-origin:0 0;">O volume útil adotado para a fossa séptica é igual a</div>
<div class="t" style="left:696.00px;top:572.90px;font-size:11.5px;line-height:13.225px;color:#000;font-weight:bold;">área interna da base multiplicada pela altura útil hu</div>
<div class="t" style="left:696.00px;top:589.90px;font-size:11.5px;line-height:13.225px;color:#000;font-weight:bold;transform:scaleX(0.9778);transform-origin:0 0;">(Ver ilustração). Esse volume foi calculado com as</div>
<div class="t" style="left:696.00px;top:606.90px;font-size:11.5px;line-height:13.225px;color:#000;font-weight:bold;transform:scaleX(0.9783);transform-origin:0 0;">dimensões informadas na "Entrada de dados"</div>
<svg class="r" style="left:500px;top:220px;" width="660" height="240" viewBox="0 0 660 240"><defs><pattern id="brk" width="5.6" height="6" patternUnits="userSpaceOnUse" x="50" y="13.4"><rect width="5.6" height="6" fill="#4a4a4a"/><rect x="0" y="4.7" width="5.6" height="1.3" fill="#8a4a20"/><rect x="0" y="0" width="0.9" height="6" fill="#9a6030"/><rect x="1.4" y="0.7" width="1.5" height="1.5" fill="#fafafa"/><rect x="3.5" y="0.7" width="1.5" height="1.5" fill="#f0f0f0"/><rect x="1.4" y="2.8" width="1.5" height="1.3" fill="#d0d0d0"/><rect x="3.5" y="2.8" width="1.5" height="1.3" fill="#c8c8c8"/></pattern><pattern id="org" width="12" height="5.86" patternUnits="userSpaceOnUse" y="33"><rect width="12" height="5.86" fill="#7a6656"/><rect x="0" y="0" width="12" height="4.3" fill="#e87a30"/></pattern><pattern id="grv" width="4.6" height="4.6" patternUnits="userSpaceOnUse"><rect width="4.6" height="4.6" fill="#8a8a8a"/><circle cx="1.3" cy="1.3" r="1.15" fill="#fafafa"/><path d="M2.4 4.4L4.6 2.2" stroke="#303030" stroke-width="1.1"/><path d="M0 3.6L1 4.6" stroke="#606060" stroke-width="0.6"/></pattern><pattern id="dots" width="7" height="14.6" patternUnits="userSpaceOnUse" x="563.5" y="81.85"><circle cx="3.5" cy="3.65" r="1.35" fill="#c4c4c4" stroke="#9a9a9a" stroke-width="0.6"/><circle cx="0" cy="10.95" r="1.35" fill="#c4c4c4" stroke="#9a9a9a" stroke-width="0.6"/><circle cx="7" cy="10.95" r="1.35" fill="#c4c4c4" stroke="#9a9a9a" stroke-width="0.6"/></pattern></defs><rect x="50.5" y="9.0" width="61.5" height="4.2" rx="1" fill="#d2d2d2" stroke="#8c8c8c" stroke-width="0.9"/><rect x="162.0" y="9.0" width="61.5" height="4.2" rx="1" fill="#d2d2d2" stroke="#8c8c8c" stroke-width="0.9"/><path d="M70 9q2 3 4 0M90 9q2 3 4 0M181 9q2 3 4 0M200 9q2 3 4 0" stroke="#777" fill="none" stroke-width="0.8"/><rect x="50" y="13.400000000000006" width="13" height="12.799999999999983" fill="url(#brk)"/><rect x="50" y="26.19999999999999" width="13" height="10.800000000000011" fill="#d2d2d2"/><rect x="50" y="37" width="13" height="47.39999999999998" fill="url(#brk)"/><rect x="50" y="84.39999999999998" width="13" height="11.600000000000023" fill="#d2d2d2"/><rect x="50" y="96" width="13" height="42" fill="url(#brk)"/><rect x="50" y="138" width="13" height="5.399999999999977" fill="#d2d2d2"/><rect x="50.5" y="13.400000000000006" width="12" height="129.99999999999997" fill="none" stroke="#8c8c8c" stroke-width="0.8"/><rect x="211" y="13.400000000000006" width="13" height="12.799999999999983" fill="url(#brk)"/><rect x="211" y="26.19999999999999" width="13" height="10.800000000000011" fill="#d2d2d2"/><rect x="211" y="37" width="13" height="47.39999999999998" fill="url(#brk)"/><rect x="211" y="84.39999999999998" width="13" height="11.600000000000023" fill="#d2d2d2"/><rect x="211" y="96" width="13" height="42" fill="url(#brk)"/><rect x="211" y="138" width="13" height="5.399999999999977" fill="#d2d2d2"/><rect x="211.5" y="13.400000000000006" width="12" height="129.99999999999997" fill="none" stroke="#8c8c8c" stroke-width="0.8"/><rect x="99.39999999999998" y="13.400000000000006" width="13" height="12.8" fill="url(#brk)"/><rect x="161.60000000000002" y="13.400000000000006" width="13" height="12.8" fill="url(#brk)"/><rect x="99.5" y="26.5" width="44" height="5" rx="1" fill="#d2d2d2" stroke="#8c8c8c" stroke-width="0.9"/><rect x="143.5" y="26.5" width="31" height="5" rx="1" fill="#d2d2d2" stroke="#8c8c8c" stroke-width="0.9"/><rect x="45.5" y="143.89999999999998" width="182.4" height="6" rx="1.5" fill="#d2d2d2" stroke="#8c8c8c" stroke-width="0.9"/><path d="M63 61.39999999999998H211" stroke="#9a9a9a" stroke-width="0.9"/><rect x="131.5" y="8.699999999999989" width="12" height="106.10000000000002" rx="0.8" fill="#fff" stroke="#8a8a8a" stroke-width="0.9"/><rect x="130.5" y="13" width="14.0" height="3" fill="#bcbcbc" stroke="#888" stroke-width="0.6"/><rect x="69.5" y="38.69999999999999" width="6.5" height="49.19999999999999" rx="0.8" fill="#fff" stroke="#8a8a8a" stroke-width="0.9"/><rect x="68" y="47" width="9.5" height="2.5" fill="#bcbcbc" stroke="#888" stroke-width="0.6"/><rect x="68" y="60.5" width="9.5" height="2.5" fill="#bcbcbc" stroke="#888" stroke-width="0.6"/><rect x="23" y="52.5" width="43" height="5.800000000000011" fill="#fff" stroke="#8a8a8a" stroke-width="0.9"/><rect x="64" y="51" width="5" height="9" fill="#bcbcbc" stroke="#888" stroke-width="0.6"/><path d="M39 55.39999999999998h6" stroke="#999" stroke-width="0.8"/><polygon points="44,53.799999999999976 50,55.39999999999998 44,56.99999999999998" fill="#d02020"/><rect x="192.5" y="38.69999999999999" width="9.600000000000023" height="54.60000000000002" rx="0.8" fill="#fff" stroke="#8a8a8a" stroke-width="0.9"/><rect x="191" y="46" width="12.600000000000023" height="3" fill="#bcbcbc" stroke="#888" stroke-width="0.6"/><rect x="191" y="64" width="12.600000000000023" height="3" fill="#bcbcbc" stroke="#888" stroke-width="0.6"/><rect x="203.79999999999995" y="52.5" width="46.90000000000009" height="8.399999999999977" fill="#fff" stroke="#8a8a8a" stroke-width="0.9"/><rect x="202.5" y="51" width="4.5" height="11.5" fill="#bcbcbc" stroke="#888" stroke-width="0.6"/><path d="M226 56.69999999999999h6" stroke="#999" stroke-width="0.8"/><polygon points="231,55.09999999999999 237,56.69999999999999 231,58.29999999999999" fill="#d02020"/><text x="92" y="54.5" font-size="10.5" fill="#222" font-family="Liberation Sans" textLength="19.5">N.A.</text><path d="M92 56H113" stroke="#666" stroke-width="0.8"/><circle cx="90.5" cy="61.39999999999998" r="1.2" fill="#222"/><path d="M118.79999999999995 61.39999999999998V143.39999999999998" stroke="#777" stroke-width="0.8"/><path d="M116.79999999999995 59.39999999999998l4 4M116.79999999999995 141.39999999999998l4 4" stroke="#444" stroke-width="0.9"/><text x="103.5" y="107" font-size="14" fill="#333" font-family="Liberation Sans">h</text><text x="109.5" y="109" font-size="8.5" fill="#333" font-family="Liberation Sans">u</text><path d="M63 158.7H211" stroke="#777" stroke-width="0.8"/><path d="M63 154.7v6M211 154.7v6M61 160.7l4-4M209 160.7l4-4" stroke="#444" stroke-width="0.8"/><text x="133" y="170.60000000000002" font-size="13" fill="#333" font-family="Liberation Sans">L</text><rect x="330.79999999999995" y="9.0" width="61.8" height="4.2" rx="1" fill="#d2d2d2" stroke="#8c8c8c" stroke-width="0.9"/><path d="M350 9q2 3 4 0M370 9q2 3 4 0" stroke="#777" fill="none" stroke-width="0.8"/><rect x="330.29999999999995" y="13.599999999999994" width="13" height="12.599999999999994" fill="url(#brk)"/><rect x="330.29999999999995" y="26.19999999999999" width="13" height="10.800000000000011" fill="#d2d2d2"/><rect x="330.29999999999995" y="37" width="13" height="47.39999999999998" fill="url(#brk)"/><rect x="330.29999999999995" y="84.39999999999998" width="13" height="11.600000000000023" fill="#d2d2d2"/><rect x="330.29999999999995" y="96" width="13" height="13" fill="url(#brk)"/><rect x="330.29999999999995" y="109" width="13" height="4.699999999999989" fill="#d2d2d2"/><rect x="330.29999999999995" y="113.69999999999999" width="13" height="24.600000000000023" fill="url(#brk)"/><rect x="330.29999999999995" y="138.3" width="13" height="5.099999999999966" fill="#d2d2d2"/><rect x="330.79999999999995" y="13.599999999999994" width="12" height="129.79999999999998" fill="none" stroke="#8c8c8c" stroke-width="0.8"/><rect x="431.79999999999995" y="26.19999999999999" width="11.7" height="10.800000000000011" fill="#d2d2d2"/><rect x="431.79999999999995" y="37" width="11.7" height="48.5" fill="url(#brk)"/><rect x="431.79999999999995" y="85.5" width="11.7" height="10.5" fill="#d2d2d2"/><rect x="431.79999999999995" y="96" width="11.7" height="13" fill="url(#brk)"/><rect x="431.79999999999995" y="109" width="11.7" height="4.699999999999989" fill="#d2d2d2"/><rect x="431.79999999999995" y="113.69999999999999" width="11.7" height="24.600000000000023" fill="url(#brk)"/><rect x="431.79999999999995" y="138.3" width="11.7" height="5.099999999999966" fill="#d2d2d2"/><rect x="432.29999999999995" y="26.19999999999999" width="10.7" height="117.19999999999999" fill="none" stroke="#8c8c8c" stroke-width="0.8"/><rect x="380.20000000000005" y="13.400000000000006" width="13" height="12.8" fill="url(#brk)"/><rect x="380.5" y="26.69999999999999" width="63" height="5.2" rx="1" fill="#d2d2d2" stroke="#8c8c8c" stroke-width="0.9"/><rect x="343.4" y="72.69999999999999" width="88.39999999999998" height="36.30000000000001" fill="url(#grv)"/><rect x="343.4" y="109" width="88.39999999999998" height="4.7" fill="#d2d2d2" stroke="#8c8c8c" stroke-width="0.6"/><rect x="345.0" y="113.5" width="3" height="2.5" fill="none" stroke="#aaa" stroke-width="0.5"/><rect x="349.5" y="113.5" width="3" height="2.5" fill="none" stroke="#aaa" stroke-width="0.5"/><rect x="354.0" y="113.5" width="3" height="2.5" fill="none" stroke="#aaa" stroke-width="0.5"/><rect x="358.5" y="113.5" width="3" height="2.5" fill="none" stroke="#aaa" stroke-width="0.5"/><rect x="363.0" y="113.5" width="3" height="2.5" fill="none" stroke="#aaa" stroke-width="0.5"/><rect x="367.5" y="113.5" width="3" height="2.5" fill="none" stroke="#aaa" stroke-width="0.5"/><rect x="372.0" y="113.5" width="3" height="2.5" fill="none" stroke="#aaa" stroke-width="0.5"/><rect x="376.5" y="113.5" width="3" height="2.5" fill="none" stroke="#aaa" stroke-width="0.5"/><rect x="381.0" y="113.5" width="3" height="2.5" fill="none" stroke="#aaa" stroke-width="0.5"/><rect x="385.5" y="113.5" width="3" height="2.5" fill="none" stroke="#aaa" stroke-width="0.5"/><rect x="390.0" y="113.5" width="3" height="2.5" fill="none" stroke="#aaa" stroke-width="0.5"/><rect x="394.5" y="113.5" width="3" height="2.5" fill="none" stroke="#aaa" stroke-width="0.5"/><rect x="399.0" y="113.5" width="3" height="2.5" fill="none" stroke="#aaa" stroke-width="0.5"/><rect x="403.5" y="113.5" width="3" height="2.5" fill="none" stroke="#aaa" stroke-width="0.5"/><rect x="408.0" y="113.5" width="3" height="2.5" fill="none" stroke="#aaa" stroke-width="0.5"/><rect x="412.5" y="113.5" width="3" height="2.5" fill="none" stroke="#aaa" stroke-width="0.5"/><rect x="417.0" y="113.5" width="3" height="2.5" fill="none" stroke="#aaa" stroke-width="0.5"/><rect x="421.5" y="113.5" width="3" height="2.5" fill="none" stroke="#aaa" stroke-width="0.5"/><rect x="426.0" y="113.5" width="3" height="2.5" fill="none" stroke="#aaa" stroke-width="0.5"/><rect x="325.20000000000005" y="143.89999999999998" width="124.8" height="6" rx="1.5" fill="#d2d2d2" stroke="#8c8c8c" stroke-width="0.9"/><rect x="400.6" y="8.699999999999989" width="11.899999999999977" height="111.30000000000001" rx="0.8" fill="#fff" stroke="#8a8a8a" stroke-width="0.9"/><rect x="399.6" y="13" width="13.899999999999977" height="3" fill="#bcbcbc" stroke="#888" stroke-width="0.6"/><rect x="364.29999999999995" y="45.69999999999999" width="9.100000000000023" height="79.69999999999999" rx="0.8" fill="#fff" stroke="#8a8a8a" stroke-width="0.9"/><rect x="362.79999999999995" y="45.69999999999999" width="12.100000000000023" height="4.300000000000011" fill="#bcbcbc" stroke="#888" stroke-width="0.6"/><rect x="362.79999999999995" y="65" width="12.100000000000023" height="4" fill="#bcbcbc" stroke="#888" stroke-width="0.6"/><rect x="304" y="52.5" width="57.5" height="9.100000000000023" fill="#fff" stroke="#8a8a8a" stroke-width="0.9"/><rect x="358.5" y="51" width="4.5" height="12" fill="#bcbcbc" stroke="#888" stroke-width="0.6"/><path d="M323 57h6" stroke="#999" stroke-width="0.8"/><polygon points="328,55.4 334,57 328,58.6" fill="#d02020"/><path d="M369 94v9" stroke="#888" stroke-width="0.8"/><polygon points="367.29999999999995,101 370.70000000000005,101 369,106" fill="#d02020"/><rect x="421.20000000000005" y="63.80000000000001" width="50.39999999999998" height="8.399999999999977" fill="#fff" stroke="#8a8a8a" stroke-width="0.9"/><path d="M443 68h6" stroke="#999" stroke-width="0.8"/><polygon points="448,66.4 454,68 448,69.6" fill="#d02020"/><path d="M313.4 72.69999999999999V143.39999999999998" stroke="#777" stroke-width="0.8"/><path d="M311.4 70.69999999999999l4 4M311.4 141.39999999999998l4 4" stroke="#444" stroke-width="0.9"/><path d="M313.4 72.69999999999999H326" stroke="#777" stroke-width="0.8"/><path d="M313.4 143.39999999999998H322" stroke="#777" stroke-width="0.8"/><text x="297.5" y="112.5" font-size="14" fill="#333" font-family="Liberation Sans">h</text><text x="304.5" y="114.5" font-size="8.5" fill="#333" font-family="Liberation Sans">u</text><path d="M343.4 158.7H431.79999999999995" stroke="#777" stroke-width="0.8"/><path d="M343.4 154.7v6M431.79999999999995 154.7v6M341.4 160.7l4-4M429.79999999999995 160.7l4-4" stroke="#444" stroke-width="0.8"/><text x="381" y="171" font-size="13.5" fill="#333" font-family="Liberation Sans">D</text><text x="390.5" y="174.5" font-size="8" fill="#333" font-family="Liberation Sans">i</text><rect x="547.3" y="8.900000000000006" width="58.6" height="4" rx="1" fill="#d2d2d2" stroke="#8c8c8c" stroke-width="0.9"/><path d="M563 9q2 3 4 0M585 9q2 3 4 0" stroke="#777" fill="none" stroke-width="0.8"/><rect x="547" y="13" width="12.4" height="13" fill="url(#brk)"/><rect x="594.7" y="13" width="11.7" height="13" fill="url(#brk)"/><rect x="546.8" y="26" width="12.6" height="7" fill="#d2d2d2"/><rect x="546.8" y="33" width="12.6" height="80" fill="url(#org)"/><rect x="546.8" y="113" width="12.6" height="11.300000000000011" fill="#d2d2d2"/><rect x="546.8" y="124.30000000000001" width="12.6" height="64.30000000000001" fill="url(#org)"/><rect x="546.8" y="188.60000000000002" width="12.6" height="18.0" fill="#d2d2d2"/><rect x="547.3" y="26" width="11.6" height="180.60000000000002" fill="none" stroke="#8c8c8c" stroke-width="0.8"/><rect x="617.2" y="33" width="12" height="80" fill="url(#org)"/><rect x="617.2" y="113" width="12" height="11.300000000000011" fill="#d2d2d2"/><rect x="617.2" y="124.30000000000001" width="12" height="64.30000000000001" fill="url(#org)"/><rect x="617.2" y="188.60000000000002" width="12" height="18.0" fill="#d2d2d2"/><rect x="617.7" y="33" width="11" height="173.60000000000002" fill="none" stroke="#8c8c8c" stroke-width="0.8"/><rect x="595.2" y="25.900000000000006" width="33.5" height="6.6" rx="1" fill="#d2d2d2" stroke="#8c8c8c" stroke-width="0.9"/><rect x="561.2" y="83.30000000000001" width="54" height="102.30000000000001" fill="url(#dots)"/><rect x="576" y="181" width="24" height="7" fill="#fff"/><text x="578.9000000000001" y="187" font-size="6" fill="#666" font-family="Liberation Sans" textLength="18.5">BRITA</text><rect x="559.4000000000001" y="188.60000000000002" width="57.8" height="18" fill="url(#grv)"/><rect x="520.5" y="63.39999999999998" width="53.90000000000009" height="8.0" fill="#fff" stroke="#8a8a8a" stroke-width="0.9"/><path d="M543 67.39999999999998h6" stroke="#999" stroke-width="0.8"/><polygon points="548,65.79999999999998 554,67.39999999999998 548,68.99999999999997" fill="#d02020"/><rect x="573" y="62" width="4" height="11" fill="#bcbcbc" stroke="#888" stroke-width="0.6"/><path d="M577 63h4q11 0 11 11v4h-8v-3q0-3-3-3h-4z" fill="#fff" stroke="#8a8a8a" stroke-width="0.9"/><rect x="583.5" y="77" width="9.5" height="5.300000000000011" fill="#bcbcbc" stroke="#888" stroke-width="0.6"/><path d="M537 72V206.60000000000002" stroke="#777" stroke-width="0.8"/><path d="M535 70l4 4M535 204.60000000000002l4 4" stroke="#444" stroke-width="0.9"/><path d="M537 206.60000000000002H546" stroke="#777" stroke-width="0.8"/><text x="522" y="145.2" font-size="14" fill="#333" font-family="Liberation Sans">h</text><text x="529" y="147" font-size="8.5" fill="#333" font-family="Liberation Sans">u</text><path d="M559.4000000000001 214H617.2" stroke="#777" stroke-width="0.8"/><path d="M559.4000000000001 210v6M617.2 210v6M557.4000000000001 216l4-4M615.2 216l4-4" stroke="#444" stroke-width="0.8"/><text x="583" y="227.5" font-size="13.5" fill="#333" font-family="Liberation Sans">D</text><text x="592.5" y="231" font-size="8" fill="#333" font-family="Liberation Sans">i</text></svg>
<div class="r" style="left:1345px;top:189px;width:21px;height:490px;background:#fff;"></div>
<div class="r" style="left:1348px;top:236px;width:15px;height:428px;background:#f0f0f0;"></div>
<div class="r" style="left:1348px;top:191px;width:15px;height:15px;background:#fff;border:1px solid #ababab;box-sizing:border-box;"></div>
<svg class="r" style="left:1351px;top:196px;" width="9" height="5" viewBox="0 0 9 5"><polygon points="0,5 9,5 4.5,0" fill="#666"/></svg>
<div class="r" style="left:1348px;top:205px;width:15px;height:31px;background:#fff;border:1px solid #ababab;box-sizing:border-box;"></div>
<div class="r" style="left:1348px;top:664px;width:15px;height:15px;background:#fff;border:1px solid #ababab;box-sizing:border-box;"></div>
<svg class="r" style="left:1351px;top:669px;" width="9" height="5" viewBox="0 0 9 5"><polygon points="0,0 9,0 4.5,5" fill="#666"/></svg>
<div class="r" style="left:1344px;top:205px;width:1px;height:474px;background:#ababab;"></div>
<div class="r" style="left:0px;top:678px;width:1366px;height:27px;background:#f3f3f3;"></div>
<div class="r" style="left:0px;top:678px;width:100px;height:1px;background:#ababab;"></div>
<div class="r" style="left:282px;top:678px;width:1063px;height:1px;background:#ababab;"></div>
<div class="r" style="left:100px;top:678px;width:1px;height:24px;background:#ababab;"></div>
<div class="r" style="left:101px;top:678px;width:181px;height:25px;background:#fff;"></div>
<div class="r" style="left:101px;top:701px;width:181px;height:2px;background:#217346;"></div>
<svg class="r" style="left:27px;top:688px;" width="5" height="9" viewBox="0 0 5 9"><polygon points="5,0 5,9 0,4.5" fill="#c6c6c6"/></svg>
<svg class="r" style="left:56px;top:688px;" width="5" height="9" viewBox="0 0 5 9"><polygon points="0,0 0,9 5,4.5" fill="#c6c6c6"/></svg>
<div class="t" style="left:112.00px;top:684.98px;font-size:12.5px;line-height:14.375px;color:#217346;font-weight:bold;transform:scaleX(1.0248);transform-origin:0 0;">Fossa, Filtro e Sumidouro</div>
<div class="r" style="left:282px;top:678px;width:1px;height:24px;background:#ababab;"></div>
<div class="t" style="left:297.00px;top:684.98px;font-size:12.5px;line-height:14.375px;color:#444;transform:scaleX(1.0533);transform-origin:0 0;">Memorial de Cálculo</div>
<div class="r" style="left:432px;top:682px;width:1px;height:19px;background:#c6c6c6;"></div>
<svg class="r" style="left:466px;top:684px;" width="17" height="17" viewBox="0 0 17 17"><circle cx="8.5" cy="8.5" r="7.5" fill="none" stroke="#666" stroke-width="1.3"/><path d="M8.5 4.5v8M4.5 8.5h8" stroke="#666" stroke-width="1.6"/></svg>
<div class="r" style="left:819px;top:687px;width:2px;height:2px;background:#999;"></div>
<div class="r" style="left:819px;top:691px;width:2px;height:2px;background:#999;"></div>
<div class="r" style="left:819px;top:695px;width:2px;height:2px;background:#999;"></div>
<div class="r" style="left:836px;top:685px;width:494px;height:15px;background:#e8e8e8;"></div>
<div class="r" style="left:836px;top:685px;width:15px;height:15px;background:#fff;border:1px solid #ababab;box-sizing:border-box;"></div>
<svg class="r" style="left:841px;top:689px;" width="5" height="7" viewBox="0 0 5 7"><polygon points="5,0 5,7 0,3.5" fill="#666"/></svg>
<div class="r" style="left:850px;top:685px;width:99px;height:15px;background:#fff;border:1px solid #ababab;box-sizing:border-box;"></div>
<div class="r" style="left:1330px;top:685px;width:15px;height:15px;background:#fff;border:1px solid #ababab;box-sizing:border-box;"></div>
<svg class="r" style="left:1335px;top:689px;" width="5" height="7" viewBox="0 0 5 7"><polygon points="0,0 0,7 5,3.5" fill="#666"/></svg>
<div class="r" style="left:0px;top:706px;width:1366px;height:22px;background:#217346;"></div>
<div class="t" style="left:7.50px;top:710.90px;font-size:11.5px;line-height:13.225px;color:#fff;transform:scaleX(0.9799);transform-origin:0 0;">Célula F17 comentada por Pedro</div>
<div class="r" style="left:1080px;top:706px;width:38px;height:22px;background:#0c6535;"></div>
<svg class="r" style="left:1092px;top:710px;" width="14" height="14" viewBox="0 0 14 14"><path d="M0.5 0.5h12v12h-12zM0.5 4.5h12M0.5 8.5h12M4.5 0.5v12M8.5 0.5v12" fill="none" stroke="#fff" stroke-width="1"/></svg>
<svg class="r" style="left:1130px;top:710px;" width="15" height="13" viewBox="0 0 15 13"><rect x="0.5" y="0.5" width="14" height="12" fill="none" stroke="#fff"/><rect x="3.5" y="2.5" width="8" height="8" fill="none" stroke="#fff"/><path d="M5 5h5M5 7h5" stroke="#fff"/></svg>
<svg class="r" style="left:1168px;top:710px;" width="15" height="13" viewBox="0 0 15 13"><rect x="0.5" y="0.5" width="14" height="12" fill="none" stroke="#fff"/><rect x="1" y="1" width="3" height="6" fill="#fff"/><rect x="5.5" y="1" width="3" height="7" fill="#fff"/><path d="M10.5 0.5v7" stroke="#fff"/></svg>
<div class="r" style="left:1200px;top:716px;width:6px;height:2px;background:#fff;"></div>
<div class="r" style="left:1209px;top:716px;width:101px;height:1px;background:#fff;"></div>
<div class="r" style="left:1252px;top:711px;width:4px;height:11px;background:#fff;"></div>
<div class="r" style="left:1259px;top:713px;width:1px;height:6px;background:#fff;"></div>
<div class="r" style="left:1313px;top:716px;width:9px;height:2px;background:#fff;"></div>
<div class="r" style="left:1316.5px;top:712.5px;width:2px;height:9px;background:#fff;"></div>
<div class="t" style="left:1337.00px;top:709.98px;font-size:12.5px;line-height:14.375px;color:#fff;transform:scaleX(0.8394);transform-origin:0 0;">90%</div>
<div class="r" style="left:0;top:728px;width:1366px;height:40px;background:linear-gradient(90deg,#ebe6ab 0%,#ebe6ab 3.5%,#e7ddc5 26%,#e6dccb 28%,#ebe0d8 43%,#e6dfd2 50%,#e3e3bc 53%,#e1e6ac 57.8%,#e1e2b6 63.7%,#ede9a4 79%,#ece8ab 100%)"></div>
<svg class="r" style="left:15px;top:740px;" width="17" height="16" viewBox="0 0 17 16"><rect x="0" y="0" width="8" height="7.5" fill="#111"/><rect x="9" y="0" width="8" height="7.5" fill="#111"/><rect x="0" y="8.5" width="8" height="7.5" fill="#111"/><rect x="9" y="8.5" width="8" height="7.5" fill="#111"/></svg>
<div class="r" style="left:48px;top:729px;width:287px;height:39px;background:#fff;border:1px solid #c8c8c8;box-sizing:border-box;border-right:none;border-top:none;"></div>
<svg class="r" style="left:59px;top:738px;" width="18" height="19" viewBox="0 0 18 19"><circle cx="11.5" cy="7.2" r="5.3" fill="none" stroke="#222" stroke-width="1.3"/><path d="M7.5 11.2L1 17.7" stroke="#222" stroke-width="1.4"/></svg>
<div class="t" style="left:88.80px;top:740.60px;font-size:14px;line-height:16.100px;color:#333;transform:scaleX(0.9638);transform-origin:0 0;">Pesquisar</div>
<svg class="r" style="left:255px;top:728px;" width="80" height="40" viewBox="0 0 80 40"><ellipse cx="42" cy="45" rx="40" ry="11" fill="#7da55a"/><path d="M50 38 Q48 28 50 24M30 36 Q28 30 29 30" stroke="#5a9a3a" stroke-width="2.2" fill="none"/><path d="M47 30 Q40 26 36 20 Q44 22 49 28Z" fill="#6ab04a"/><path d="M52 30 Q60 25 64 19 Q56 22 51 28Z" fill="#6ab04a"/><path d="M28 36 Q22 33 19 28 Q26 30 29 34Z" fill="#6ab04a"/><path d="M32 36 Q38 33 40 28 Q34 31 31 34Z" fill="#6ab04a"/><path d="M43 14 Q41 5 47 3 Q50 0 55 2 Q58 -1 62 3 Q68 5 68 13 Q66 24 56 27 Q46 25 43 14Z" fill="#f4c21c"/><path d="M50 5 Q55 14 56 27 Q57 14 62 5 Q56 2 50 5Z" fill="#f9d548"/><ellipse cx="56" cy="11" rx="4" ry="2.5" fill="#f06a10"/><path d="M25 22 Q24 16 28 15 Q31 13 34 15 Q38 16 37 22 Q35 30 31 32 Q26 29 25 22Z" fill="#f2bc1a"/><ellipse cx="31" cy="21" rx="3" ry="2" fill="#f06a10"/><path d="M13 33 Q12 25 18 23 Q25 25 24 33 Q22 39 18 39 Q14 38 13 33Z" fill="#7a5cb0"/><path d="M18 23 L16 18" stroke="#5a9a3a" stroke-width="1.3"/><circle cx="68" cy="32" r="5.5" fill="#f0a828"/><circle cx="68" cy="32" r="5.5" fill="none" stroke="#f6c040" stroke-width="1.5" stroke-dasharray="1.5 1.2"/><circle cx="68" cy="32" r="2.2" fill="#c86a10"/></svg>
<svg class="r" style="left:351px;top:739px;" width="18" height="17" viewBox="0 0 18 17"><path d="M1 1.5h11M1 15.5h11" stroke="#111" stroke-width="1.5"/><rect x="2.2" y="5.2" width="9.6" height="6.6" fill="none" stroke="#111" stroke-width="1.5"/><rect x="14.5" y="5" width="2.5" height="2.5" fill="#111"/><path d="M15.7 9v7" stroke="#111" stroke-width="1.5"/></svg>
<svg class="r" style="left:399px;top:737px;" width="24" height="22" viewBox="0 0 24 22"><defs><linearGradient id="cpa" x1="0" y1="1" x2="0.6" y2="0"><stop offset="0" stop-color="#f0c020"/><stop offset="0.45" stop-color="#40c070"/><stop offset="1" stop-color="#2090f0"/></linearGradient><linearGradient id="cpb" x1="0.3" y1="0" x2="0.7" y2="1"><stop offset="0" stop-color="#3070f0"/><stop offset="0.5" stop-color="#c060e0"/><stop offset="1" stop-color="#f07050"/></linearGradient></defs><path d="M8 1 Q6 1 5 4 L1 16 Q0 20 4 21 L9 21 Q11 21 12 18 L16 5 Q17 1 13 1Z" fill="url(#cpa)"/><path d="M12 21 Q16 21 17 18 L23 6 Q24 1 19 1 L15 1 Q13 1 12 4 L8 17 Q7 21 10 21Z" fill="url(#cpb)" opacity="0.92"/></svg>
<svg class="r" style="left:448px;top:735px;" width="25" height="25" viewBox="0 0 25 25"><defs><linearGradient id="ed1" x1="0" y1="0" x2="1" y2="0.6"><stop offset="0" stop-color="#1a8ee0"/><stop offset="0.6" stop-color="#30c0d0"/><stop offset="1" stop-color="#60d880"/></linearGradient><linearGradient id="ed2" x1="0" y1="0" x2="0" y2="1"><stop offset="0" stop-color="#1060c0"/><stop offset="1" stop-color="#0a4a9a"/></linearGradient></defs><path d="M12.5 0.5 A12 12 0 0 1 24.5 12.5 Q24.5 17 19 17 H10 Q11 21 17 21.5 Q20 22 22 21 Q18 24.5 12.5 24.5 A12 12 0 0 1 0.5 12.5 A12 12 0 0 1 12.5 0.5Z" fill="url(#ed1)"/><path d="M0.5 12.5 Q2 6 9 6 Q15 6 16 11 Q12 8 8 10 Q4 13 7 19 Q9 23 13 24.5 A12 12 0 0 1 0.5 12.5Z" fill="url(#ed2)"/><path d="M9 14 Q9 10 13 10 Q16 10 16.5 13Z" fill="#bfe8f8" opacity="0.6"/></svg>
<svg class="r" style="left:497px;top:737px;" width="23" height="22" viewBox="0 0 23 22"><rect x="0" y="3" width="23" height="18" rx="1" fill="#f5c242"/><rect x="0" y="0" width="9" height="5" rx="1" fill="#e8a820"/><rect x="0" y="7" width="23" height="14" fill="#fcd460"/><rect x="6" y="13" width="11" height="8" fill="#2a7fd4"/><rect x="9" y="16" width="5" height="5" fill="#fcd460"/></svg>
<svg class="r" style="left:546px;top:737px;" width="23" height="22" viewBox="0 0 23 22"><rect x="0" y="0" width="23" height="22" rx="3" fill="#b30b00"/><path d="M5 17q3-2 6-9q1-4-0.5-4t-1 4q2 6 9 7q2 0 1-1t-6 0q-5 1-8 4q-1 1 0.5 0" fill="none" stroke="#fff" stroke-width="1.5"/></svg>
<svg class="r" style="left:595px;top:736px;" width="24" height="24" viewBox="0 0 24 24"><polygon points="12,1 24,10 24,23 0,23 0,10" fill="#1490df"/><rect x="3" y="5" width="18" height="10" fill="#fff"/><polygon points="0,10 12,18 24,10 24,23 0,23" fill="#28a8ea"/><polygon points="0,23 12,14 24,23" fill="#0f78d4"/></svg>
<svg class="r" style="left:644px;top:736px;" width="24" height="24" viewBox="0 0 24 24"><circle cx="12" cy="12" r="12" fill="#db4437"/><path d="M12 12 L1.6 6 A12 12 0 0 0 6 22.4Z" fill="#0f9d58"/><path d="M12 12 L6 22.4 A12 12 0 0 0 22.4 6 H12Z" fill="#ffcd40"/><path d="M12 6h10.4" stroke="#ffcd40" stroke-width="0"/><circle cx="12" cy="12" r="5.5" fill="#fff"/><circle cx="12" cy="12" r="4.3" fill="#4285f4"/></svg>
<svg class="r" style="left:692px;top:736px;" width="25" height="24" viewBox="0 0 25 24"><rect x="8" y="3" width="16" height="18" fill="#fff" stroke="#2b579a"/><path d="M11 7h10M11 10h10M11 13h10M11 16h10" stroke="#2b579a"/><polygon points="0,3 14,0 14,24 0,21" fill="#2b579a"/><text x="2.5" y="16" font-size="11" font-weight="bold" fill="#fff" font-family="Liberation Sans">W</text></svg>
<div class="r" style="left:730px;top:728px;width:48px;height:40px;background:#eef1dc;"></div>
<div class="r" style="left:730px;top:766px;width:48px;height:2px;background:#0078d4;"></div>
<svg class="r" style="left:742px;top:736px;" width="25" height="24" viewBox="0 0 25 24"><rect x="8" y="3" width="16" height="18" fill="#fff" stroke="#217346"/><path d="M11 7h10M11 10h10M11 13h10M11 16h10M16 3v18" stroke="#217346"/><polygon points="0,3 14,0 14,24 0,21" fill="#217346"/><text x="3" y="16" font-size="11" font-weight="bold" fill="#fff" font-family="Liberation Sans">X</text></svg>
<svg class="r" style="left:896px;top:733px;" width="32" height="30" viewBox="0 0 32 30"><defs><linearGradient id="sun" x1="0" y1="0" x2="1" y2="1"><stop offset="0" stop-color="#f6b020"/><stop offset="1" stop-color="#f07010"/></linearGradient><linearGradient id="cld" x1="0" y1="0" x2="0" y2="1"><stop offset="0" stop-color="#eef4fc"/><stop offset="1" stop-color="#c4daf4"/></linearGradient></defs><circle cx="16" cy="16.2" r="9.1" fill="url(#sun)"/><path d="M5 12.5 Q4 9 7.5 8.5 Q8.5 4 13 5 Q16 4 17 8 Q20 8.5 19.5 12.5Z" fill="url(#cld)" stroke="#88aee8" stroke-width="0.6"/><path d="M14.5 24 Q13.5 20.5 17 20 Q18.5 15.5 23 16.5 Q26 16 27 20 Q29.5 20.5 28.5 24Z" fill="url(#cld)" stroke="#88aee8" stroke-width="0.6"/><circle cx="22" cy="8.6" r="5.8" fill="#d02a20"/><text x="19.6" y="12.2" font-size="9" fill="#fff" font-family="Liberation Sans">1</text></svg>
<div class="t" style="left:932.50px;top:741.06px;font-size:13.5px;line-height:15.525px;color:#222;transform:scaleX(0.9349);transform-origin:0 0;">25°C</div>
<div class="t" style="left:970.60px;top:741.06px;font-size:13.5px;line-height:15.525px;color:#222;transform:scaleX(0.9836);transform-origin:0 0;">Parc ensolarado</div>
<svg class="r" style="left:1092px;top:742px;" width="12" height="8" viewBox="0 0 12 8"><path d="M1 7l5-5.5 5 5.5" fill="none" stroke="#222" stroke-width="1.3"/></svg>
<svg class="r" style="left:1114px;top:739px;" width="18" height="15" viewBox="0 0 18 15"><path d="M3 5h12v8H3z" fill="none" stroke="#222" stroke-width="1.2"/><path d="M15 8h2M6 1v4M2 3h4M5 9h4" stroke="#222" stroke-width="1.2"/></svg>
<svg class="r" style="left:1142px;top:737px;" width="16" height="19" viewBox="0 0 16 19"><rect x="2" y="5" width="10" height="10" rx="2" fill="none" stroke="#222" stroke-width="1.2"/><path d="M12 8l3-2v7l-3-2" fill="none" stroke="#222"/><path d="M4 2a8 8 0 0 1 6 0M4 18a8 8 0 0 0 6 0" fill="none" stroke="#222"/></svg>
<svg class="r" style="left:1164px;top:739px;" width="18" height="16" viewBox="0 0 18 16"><path d="M2 14a12 12 0 0 1 14-12M5 14a9 9 0 0 1 9-9M8 14a6 6 0 0 1 5-5" fill="none" stroke="#222" stroke-width="1.2"/><circle cx="15" cy="14" r="1.3" fill="#222"/></svg>
<svg class="r" style="left:1185px;top:739px;" width="18" height="16" viewBox="0 0 18 16"><path d="M1 6h4l5-4v13l-5-4H1z" fill="none" stroke="#222" stroke-width="1.2"/><path d="M12 5q2 3 0 6M14.5 3q3.5 5 0 10" fill="none" stroke="#222" stroke-width="1.1"/></svg>
<div class="t" style="left:1213.50px;top:734.09px;font-size:11.3px;line-height:12.995px;color:#222;transform:scaleX(0.9148);transform-origin:0 0;">POR</div>
<div class="t" style="left:1212.70px;top:751.09px;font-size:11.3px;line-height:12.995px;color:#222;transform:scaleX(0.8740);transform-origin:0 0;">PTB2</div>
<div class="t" style="left:1265.00px;top:734.09px;font-size:11.3px;line-height:12.995px;color:#222;transform:scaleX(0.9124);transform-origin:0 0;">14:44</div>
<div class="t" style="left:1250.40px;top:751.09px;font-size:11.3px;line-height:12.995px;color:#222;transform:scaleX(0.9955);transform-origin:0 0;">10/09/2024</div>
<svg class="r" style="left:1324px;top:739px;" width="28" height="26" viewBox="0 0 28 26"><path d="M1 1h16v12H8l-4 4v-4H1z" fill="#111"/><path d="M4 4.5h10M4 7.5h10M4 10.5h7" stroke="#fff" stroke-width="1.2"/><circle cx="17" cy="16" r="8" fill="#d6d4c4" stroke="#777" stroke-width="1"/><text x="13.8" y="20.5" font-size="11.5" fill="#111" font-family="Liberation Sans">1</text></svg>
<div class="r" style="left:1361px;top:729px;width:1px;height:39px;background:#c4c0a0;"></div>
<svg class="r" style="left:900px;top:0px;" width="466" height="50" viewBox="0 0 466 50"><rect x="8" y="0" width="4" height="13" fill="#e6e6e6"/><rect x="15" y="0" width="4" height="20" fill="#e6e6e6"/><rect x="23" y="0" width="4" height="13" fill="#e6e6e6"/><rect x="29" y="0" width="4" height="29" fill="#e6e6e6"/><rect x="37" y="0" width="4" height="18" fill="#e6e6e6"/><clipPath id="hc"><circle cx="106" cy="-2" r="36"/></clipPath><g clip-path="url(#hc)" fill="#e6e6e6"><rect x="74" y="-40" width="12" height="80"/><rect x="97" y="-40" width="13" height="80"/><rect x="117" y="-40" width="3" height="80"/><rect x="122" y="-40" width="3" height="80"/><rect x="127" y="-40" width="3" height="80"/><rect x="132" y="-40" width="3" height="80"/><rect x="137" y="-40" width="3" height="80"/><rect x="142" y="-40" width="3" height="80"/></g><polygon points="57,0 66,0 66,12" fill="#e6e6e6"/><circle cx="178" cy="-4" r="13" fill="#e6e6e6"/><circle cx="230" cy="17.5" r="20.5" fill="#e6e6e6"/><circle cx="230" cy="17.5" r="13.5" fill="#fff"/><circle cx="230" cy="17.5" r="7.5" fill="#e6e6e6"/><circle cx="319" cy="-6" r="60" fill="none" stroke="#e6e6e6" stroke-width="13"/><clipPath id="bc"><circle cx="319" cy="-6" r="50"/></clipPath><g clip-path="url(#bc)" stroke="#e6e6e6" stroke-width="5"><line x1="270" y1="-10" x2="340" y2="60"/><line x1="282" y1="-10" x2="352" y2="60"/><line x1="294" y1="-10" x2="364" y2="60"/><line x1="306" y1="-10" x2="376" y2="60"/><line x1="318" y1="-10" x2="388" y2="60"/><line x1="330" y1="-10" x2="400" y2="60"/></g><g stroke="#e6e6e6" stroke-width="6"><line x1="440" y1="-10" x2="380" y2="50"/><line x1="456" y1="-10" x2="396" y2="50"/><line x1="472" y1="-10" x2="412" y2="50"/><line x1="488" y1="-10" x2="428" y2="50"/><line x1="504" y1="-10" x2="444" y2="50"/><line x1="520" y1="-10" x2="460" y2="50"/></g></svg>
<svg class="r" style="left:9px;top:2px;" width="19" height="17" viewBox="0 0 19 17"><rect x="6" y="2" width="12" height="13" fill="#fff" stroke="#217346" stroke-width="1"/><path d="M9 5h7M9 8h7M9 11h7M12 3v12" stroke="#217346" stroke-width="0.8"/><polygon points="0,2 11,0 11,17 0,15" fill="#217346"/><path d="M3 5l5 7M8 5l-5 7" stroke="#fff" stroke-width="1.6"/></svg>
<svg class="r" style="left:40px;top:4px;" width="15" height="14" viewBox="0 0 15 14"><rect x="0" y="0" width="14" height="14" fill="#8c5ab4"/><rect x="3" y="1.5" width="8" height="5" fill="#fff"/><rect x="3.5" y="9" width="7" height="5" fill="#fff"/><rect x="5" y="10.5" width="2.5" height="3.5" fill="#8c5ab4"/></svg>
<svg class="r" style="left:68px;top:3px;" width="18" height="15" viewBox="0 0 18 15"><polygon points="0,6 6,1 6,11" fill="#3c7cc4"/><path d="M5 6 H9 A4.5 4.3 0 0 1 9 14.6 H7" fill="none" stroke="#3c7cc4" stroke-width="2.2"/></svg>
<svg class="r" style="left:88px;top:9px;" width="7" height="4" viewBox="0 0 7 4"><polygon points="0,0 7,0 3.5,4" fill="#666"/></svg>
<svg class="r" style="left:108px;top:3px;" width="18" height="15" viewBox="0 0 18 15"><polygon points="17,6 11,1 11,11" fill="#b9b9b9"/><path d="M12 6 H8.5 A4.5 4.3 0 0 0 8.5 14.6 H10" fill="none" stroke="#b9b9b9" stroke-width="2.2"/></svg>
<svg class="r" style="left:129px;top:9px;" width="7" height="4" viewBox="0 0 7 4"><polygon points="0,0 7,0 3.5,4" fill="#c5c5c5"/></svg>
<svg class="r" style="left:147px;top:8px;" width="7" height="7" viewBox="0 0 7 7"><rect x="0" y="0" width="7" height="1.2" fill="#555"/><polygon points="0,3 7,3 3.5,7" fill="#555"/></svg>
<div class="t" style="left:469.00px;top:6.44px;font-size:12px;line-height:13.800px;color:#444;transform:scaleX(0.9772);transform-origin:0 0;">Fossa Séptica, Filtro Anaeróbio e Sumidouro - Macro [2º Versão] - Microsoft Excel</div>
<div class="t" style="left:1229.00px;top:5.52px;font-size:13px;line-height:14.950px;color:#555;font-weight:bold;transform:scaleX(1.1334);transform-origin:0 0;">?</div>
<svg class="r" style="left:1254px;top:4px;" width="18" height="14" viewBox="0 0 18 14"><rect x="0.5" y="0.5" width="15" height="11" fill="none" stroke="#666"/><path d="M0.5 3h15" stroke="#666"/><path d="M8 11V5M5.5 7.5L8 5l2.5 2.5" fill="none" stroke="#666"/></svg>
<div class="r" style="left:1287px;top:12px;width:11px;height:2px;background:#666;"></div>
<svg class="r" style="left:1315px;top:4px;" width="14" height="14" viewBox="0 0 14 14"><rect x="1" y="4" width="9" height="8" fill="none" stroke="#666" stroke-width="1.3"/><path d="M4 4V1h9v8h-3" fill="none" stroke="#666" stroke-width="1.3"/></svg>
<svg class="r" style="left:1345px;top:5px;" width="13" height="13" viewBox="0 0 13 13"><path d="M1 1l11 11M12 1L1 12" stroke="#555" stroke-width="1.8"/></svg>
<div class="r" style="left:0px;top:25px;width:59px;height:25px;background:#217346;"></div>
<div class="t" style="left:4.00px;top:31.44px;font-size:12px;line-height:13.800px;color:#fff;transform:scaleX(0.9125);transform-origin:0 0;">ARQUIVO</div>
<div class="r" style="left:0px;top:49px;width:63px;height:1px;background:#d5d5d5;"></div>
<div class="r" style="left:63px;top:25px;width:112px;height:25px;background:#fff;border:1px solid #d5d5d5;box-sizing:border-box;border-bottom:none;"></div>
<div class="r" style="left:175px;top:49px;width:1191px;height:1px;background:#d5d5d5;"></div>
<div class="t" style="left:76.50px;top:31.44px;font-size:12px;line-height:13.800px;color:#217346;transform:scaleX(0.9385);transform-origin:0 0;">PÁGINA INICIAL</div>
<div class="t" style="left:190.00px;top:31.44px;font-size:12px;line-height:13.800px;color:#444;transform:scaleX(0.8423);transform-origin:0 0;">INSERIR</div>
<div class="t" style="left:260.00px;top:31.44px;font-size:12px;line-height:13.800px;color:#444;transform:scaleX(0.9310);transform-origin:0 0;">LAYOUT DA PÁGINA</div>
<div class="t" style="left:396.00px;top:31.44px;font-size:12px;line-height:13.800px;color:#444;transform:scaleX(0.9149);transform-origin:0 0;">FÓRMULAS</div>
<div class="t" style="left:486.00px;top:31.44px;font-size:12px;line-height:13.800px;color:#444;transform:scaleX(0.9139);transform-origin:0 0;">DADOS</div>
<div class="t" style="left:554.00px;top:31.44px;font-size:12px;line-height:13.800px;color:#444;transform:scaleX(0.8622);transform-origin:0 0;">REVISÃO</div>
<div class="t" style="left:629.00px;top:31.44px;font-size:12px;line-height:13.800px;color:#444;transform:scaleX(0.8997);transform-origin:0 0;">EXIBIÇÃO</div>
<div class="t" style="left:709.00px;top:31.44px;font-size:12px;line-height:13.800px;color:#444;transform:scaleX(0.8680);transform-origin:0 0;">DESENVOLVEDOR</div>
<svg class="r" style="left:1190px;top:29px;" width="17" height="15" viewBox="0 0 17 15"><polygon points="8.5,0.5 16.5,14.5 0.5,14.5" fill="#eac080"/><rect x="7.6" y="4.5" width="1.8" height="6" fill="#333"/><rect x="7.6" y="11.5" width="1.8" height="1.8" fill="#333"/></svg>
<div class="t" style="left:1211.00px;top:29.98px;font-size:12.5px;line-height:14.375px;color:#444;transform:scaleX(0.9628);transform-origin:0 0;">Conta da Microsoft</div>
<svg class="r" style="left:1319px;top:35px;" width="7" height="4" viewBox="0 0 7 4"><polygon points="0,0 7,0 3.5,4" fill="#777"/></svg>
<svg class="r" style="left:1332px;top:25px;" width="25" height="24" viewBox="0 0 25 24"><rect width="25" height="24" fill="#b0b0b0"/><circle cx="12.5" cy="9" r="5.5" fill="#fff"/><path d="M3 24 Q3 15 12.5 15 Q22 15 22 24Z" fill="#fff"/></svg>
<div class="r" style="left:0px;top:142px;width:1366px;height:1px;background:#d5d5d5;"></div>
<div class="r" style="left:106px;top:54px;width:1px;height:84px;background:#e1e1e1;"></div>
<div class="r" style="left:313px;top:54px;width:1px;height:84px;background:#e1e1e1;"></div>
<div class="r" style="left:652px;top:54px;width:1px;height:84px;background:#e1e1e1;"></div>
<div class="r" style="left:792px;top:54px;width:1px;height:84px;background:#e1e1e1;"></div>
<div class="r" style="left:1019px;top:54px;width:1px;height:84px;background:#e1e1e1;"></div>
<div class="r" style="left:1165px;top:54px;width:1px;height:84px;background:#e1e1e1;"></div>
<div class="r" style="left:1334px;top:54px;width:1px;height:84px;background:#e1e1e1;"></div>
<div class="t" style="left:4.00px;top:127.90px;font-size:11.5px;line-height:13.225px;color:#555;transform:scaleX(0.9527);transform-origin:0 0;">Área de Transf...</div>
<div class="t" style="left:188.00px;top:127.90px;font-size:11.5px;line-height:13.225px;color:#555;transform:scaleX(0.9861);transform-origin:0 0;">Fonte</div>
<div class="t" style="left:442.00px;top:127.90px;font-size:11.5px;line-height:13.225px;color:#555;transform:scaleX(1.0324);transform-origin:0 0;">Alinhamento</div>
<div class="t" style="left:694.00px;top:127.90px;font-size:11.5px;line-height:13.225px;color:#555;transform:scaleX(0.9779);transform-origin:0 0;">Número</div>
<div class="t" style="left:893.00px;top:127.90px;font-size:11.5px;line-height:13.225px;color:#555;transform:scaleX(0.9246);transform-origin:0 0;">Estilo</div>
<div class="t" style="left:1074.00px;top:127.90px;font-size:11.5px;line-height:13.225px;color:#555;transform:scaleX(0.9647);transform-origin:0 0;">Células</div>
<div class="t" style="left:1233.00px;top:127.90px;font-size:11.5px;line-height:13.225px;color:#555;transform:scaleX(0.9669);transform-origin:0 0;">Edição</div>
<svg class="r" style="left:96px;top:129px;" width="9" height="9" viewBox="0 0 9 9"><path d="M0.5 8V0.5H8" fill="none" stroke="#999"/><path d="M3 3l5 5M8 5v3H5" fill="none" stroke="#999"/></svg>
<svg class="r" style="left:303px;top:129px;" width="9" height="9" viewBox="0 0 9 9"><path d="M0.5 8V0.5H8" fill="none" stroke="#999"/><path d="M3 3l5 5M8 5v3H5" fill="none" stroke="#999"/></svg>
<svg class="r" style="left:642px;top:129px;" width="9" height="9" viewBox="0 0 9 9"><path d="M0.5 8V0.5H8" fill="none" stroke="#999"/><path d="M3 3l5 5M8 5v3H5" fill="none" stroke="#999"/></svg>
<svg class="r" style="left:781px;top:129px;" width="9" height="9" viewBox="0 0 9 9"><path d="M0.5 8V0.5H8" fill="none" stroke="#999"/><path d="M3 3l5 5M8 5v3H5" fill="none" stroke="#999"/></svg>
<svg class="r" style="left:1346px;top:131px;" width="11" height="7" viewBox="0 0 11 7"><path d="M1 6l4.5-4.5L10 6" fill="none" stroke="#555" stroke-width="1.8"/></svg>
<svg class="r" style="left:22px;top:57px;" width="30" height="32" viewBox="0 0 30 32"><rect x="1" y="4" width="21" height="24" rx="1.5" fill="#e8c07d"/><rect x="6" y="2" width="11" height="5" rx="1" fill="#666"/><rect x="9.5" y="0" width="4" height="4" rx="1" fill="#666"/><path d="M14.5 12.5h9l4.5 4.5v13.5h-13.5z" fill="#fff" stroke="#666" stroke-width="1"/><path d="M23.5 12.5v4.5h4.5" fill="none" stroke="#666"/></svg>
<div class="t" style="left:21.00px;top:92.48px;font-size:12.5px;line-height:14.375px;color:#444;transform:scaleX(0.9374);transform-origin:0 0;">Colar</div>
<svg class="r" style="left:31px;top:111px;" width="7" height="4" viewBox="0 0 7 4"><polygon points="0,0 7,0 3.5,4" fill="#666"/></svg>
<svg class="r" style="left:59px;top:55px;" width="16" height="17" viewBox="0 0 16 17"><path d="M4 1l8 11M12 1L4 12" stroke="#555" stroke-width="1.6"/><circle cx="3.5" cy="13" r="2.6" fill="#fff" stroke="#3c7cc4" stroke-width="1.3"/><circle cx="12.5" cy="13" r="2.6" fill="#fff" stroke="#3c7cc4" stroke-width="1.3"/></svg>
<svg class="r" style="left:58px;top:79px;" width="18" height="16" viewBox="0 0 18 16"><path d="M1 1h6l2 2v9H1z" fill="#fff" stroke="#555"/><path d="M3 4h4M3 6h4" stroke="#3c7cc4"/><path d="M7 5h6l3 3v7.5H7z" fill="#fff" stroke="#555"/><path d="M9 9h5M9 11h5M9 13h5" stroke="#3c7cc4"/></svg>
<svg class="r" style="left:81px;top:86px;" width="7" height="4" viewBox="0 0 7 4"><polygon points="0,0 7,0 3.5,4" fill="#666"/></svg>
<svg class="r" style="left:58px;top:103px;" width="18" height="15" viewBox="0 0 18 15"><path d="M1 10 L7 5 L11 9 L6 14 Z" fill="#e8c07d"/><path d="M8 6 L14 0.5 L17 3.5 L11 9 Z" fill="#666"/></svg>
<div class="r" style="left:111px;top:61px;width:111px;height:23px;background:#fff;border:1px solid #c6c6c6;box-sizing:border-box;"></div>
<div class="r" style="left:221px;top:61px;width:44px;height:23px;background:#fff;border:1px solid #c6c6c6;box-sizing:border-box;"></div>
<div class="t" style="left:114.00px;top:65.98px;font-size:12.5px;line-height:14.375px;color:#222;transform:scaleX(0.9315);transform-origin:0 0;">Calibri</div>
<svg class="r" style="left:210px;top:71px;" width="7" height="4" viewBox="0 0 7 4"><polygon points="0,0 7,0 3.5,4" fill="#444"/></svg>
<div class="t" style="left:225.00px;top:65.98px;font-size:12.5px;line-height:14.375px;color:#222;transform:scaleX(0.8477);transform-origin:0 0;">11</div>
<svg class="r" style="left:254px;top:71px;" width="7" height="4" viewBox="0 0 7 4"><polygon points="0,0 7,0 3.5,4" fill="#444"/></svg>
<div class="t" style="left:271.00px;top:65.60px;font-size:14px;line-height:16.100px;color:#b0b0b0;transform:scaleX(1.1779);transform-origin:0 0;">A</div>
<svg class="r" style="left:280px;top:64px;" width="6" height="4" viewBox="0 0 6 4"><polygon points="0,4 6,4 3,0" fill="#b0b0b0"/></svg>
<div class="t" style="left:294.00px;top:67.44px;font-size:12px;line-height:13.800px;color:#b0b0b0;transform:scaleX(1.1245);transform-origin:0 0;">A</div>
<svg class="r" style="left:300px;top:64px;" width="6" height="4" viewBox="0 0 6 4"><polygon points="0,0 6,0 3,4" fill="#b0b0b0"/></svg>
<div class="t" style="left:117.00px;top:96.98px;font-size:12.5px;line-height:14.375px;color:#a8a8a8;font-weight:bold;transform:scaleX(0.9970);transform-origin:0 0;">N</div>
<div class="t" style="left:140.00px;top:96.98px;font-size:12.5px;line-height:14.375px;color:#a8a8a8;font-style:italic;transform:scaleX(1.7278);transform-origin:0 0;">I</div>
<div class="t" style="left:162.00px;top:96.98px;font-size:12.5px;line-height:14.375px;color:#a8a8a8;font-weight:bold;transform:scaleX(0.9595);transform-origin:0 0;">S</div>
<div class="r" style="left:162px;top:110px;width:9px;height:1px;background:#a8a8a8;"></div>
<svg class="r" style="left:181px;top:102px;" width="6" height="3" viewBox="0 0 6 3"><polygon points="0,0 6,0 3,3" fill="#b8b8b8"/></svg>
<svg class="r" style="left:224px;top:102px;" width="6" height="3" viewBox="0 0 6 3"><polygon points="0,0 6,0 3,3" fill="#b8b8b8"/></svg>
<svg class="r" style="left:267px;top:102px;" width="6" height="3" viewBox="0 0 6 3"><polygon points="0,0 6,0 3,3" fill="#b8b8b8"/></svg>
<svg class="r" style="left:302px;top:102px;" width="6" height="3" viewBox="0 0 6 3"><polygon points="0,0 6,0 3,3" fill="#b8b8b8"/></svg>
<div class="r" style="left:193px;top:92px;width:1px;height:22px;background:#e1e1e1;"></div>
<div class="r" style="left:236px;top:92px;width:1px;height:22px;background:#e1e1e1;"></div>
<svg class="r" style="left:202px;top:96px;" width="14" height="14" viewBox="0 0 14 14"><rect x="0.5" y="0.5" width="13" height="13" fill="none" stroke="#c8c0c8" stroke-dasharray="1 1"/><path d="M7 0v14M0 7h14" stroke="#c8c0c8" stroke-dasharray="1 1"/><path d="M0 13.5h14" stroke="#aaa"/></svg>
<svg class="r" style="left:243px;top:94px;" width="18" height="18" viewBox="0 0 18 18"><path d="M3 7l5-5 6 6-5 5z" fill="#fff" stroke="#aaa" stroke-width="1.2"/><path d="M7 1v5" stroke="#aaa"/><path d="M14 8q3 2 1 5" fill="none" stroke="#aaa" stroke-width="1.5"/><rect x="1" y="14" width="16" height="3" fill="#e6e6e6"/></svg>
<div class="t" style="left:281.00px;top:94.68px;font-size:15px;line-height:17.250px;color:#b0b0b0;font-weight:bold;transform:scaleX(0.9231);transform-origin:0 0;">A</div>
<svg class="r" style="left:322px;top:65px;" width="16" height="8" viewBox="0 0 16 8"><rect x="0" y="0" width="14" height="1.2" fill="#aaa"/><rect x="0" y="3" width="14" height="1.2" fill="#aaa"/></svg>
<svg class="r" style="left:344px;top:70px;" width="16" height="11" viewBox="0 0 16 11"><rect x="0" y="0" width="14" height="1.2" fill="#aaa"/><rect x="0" y="3" width="14" height="1.2" fill="#aaa"/><rect x="0" y="6" width="14" height="1.2" fill="#aaa"/></svg>
<svg class="r" style="left:366px;top:74px;" width="16" height="8" viewBox="0 0 16 8"><rect x="0" y="0" width="14" height="1.2" fill="#aaa"/><rect x="0" y="3" width="14" height="1.2" fill="#aaa"/></svg>
<svg class="r" style="left:322px;top:98px;" width="16" height="14" viewBox="0 0 16 14"><rect x="0" y="0" width="14" height="1.2" fill="#aaa"/><rect x="0" y="3" width="9" height="1.2" fill="#aaa"/><rect x="0" y="6" width="14" height="1.2" fill="#aaa"/><rect x="0" y="9" width="9" height="1.2" fill="#aaa"/></svg>
<svg class="r" style="left:344px;top:98px;" width="16" height="14" viewBox="0 0 16 14"><rect x="0" y="0" width="14" height="1.2" fill="#aaa"/><rect x="2" y="3" width="10" height="1.2" fill="#aaa"/><rect x="0" y="6" width="14" height="1.2" fill="#aaa"/><rect x="2" y="9" width="10" height="1.2" fill="#aaa"/></svg>
<svg class="r" style="left:366px;top:98px;" width="16" height="14" viewBox="0 0 16 14"><rect x="0" y="0" width="14" height="1.2" fill="#aaa"/><rect x="5" y="3" width="9" height="1.2" fill="#aaa"/><rect x="0" y="6" width="14" height="1.2" fill="#aaa"/><rect x="5" y="9" width="9" height="1.2" fill="#aaa"/></svg>
<div class="r" style="left:388px;top:61px;width:1px;height:22px;background:#e1e1e1;"></div>
<div class="r" style="left:388px;top:92px;width:1px;height:22px;background:#e1e1e1;"></div>
<div class="r" style="left:441px;top:60px;width:1px;height:55px;background:#e1e1e1;"></div>
<svg class="r" style="left:396px;top:63px;" width="26" height="16" viewBox="0 0 26 16"><text x="0" y="12" font-size="10" fill="#aaa" font-family="Liberation Sans" transform="rotate(-40 6 8)">ab</text><path d="M7 14l11-9M15 5h3v3" fill="none" stroke="#aaa" stroke-width="1.2"/><polygon points="22,7 27,7 24.5,10" fill="#bbb"/></svg>
<svg class="r" style="left:396px;top:97px;" width="16" height="12" viewBox="0 0 16 12"><path d="M5 1h10M7 4h8M7 7h8M5 10h10" stroke="#aaa" stroke-width="1.2"/><path d="M5 5.5H0M2.5 3L0 5.5 2.5 8" fill="none" stroke="#aaa" stroke-width="1.2"/></svg>
<svg class="r" style="left:418px;top:97px;" width="16" height="12" viewBox="0 0 16 12"><path d="M1 1h14M7 4h8M7 7h8M1 10h14" stroke="#aaa" stroke-width="1.2"/><path d="M0 5.5h5M2.5 3L5 5.5 2.5 8" fill="none" stroke="#aaa" stroke-width="1.2"/></svg>
<svg class="r" style="left:449px;top:64px;" width="16" height="15" viewBox="0 0 16 15"><rect x="0.5" y="0.5" width="8" height="3" fill="none" stroke="#aaa"/><path d="M0.5 5.5h9M0.5 8.5h7M0.5 11.5h7M0.5 14.5h9" stroke="#aaa"/><path d="M10 6h3a2 2 0 0 1 0 5h-3M11.5 9.5l-1.5 1.5 1.5 1.5" fill="none" stroke="#aaa"/></svg>
<div class="t" style="left:468.00px;top:66.48px;font-size:12.5px;line-height:14.375px;color:#a6a6a6;transform:scaleX(0.9663);transform-origin:0 0;">Quebrar Texto Automaticamente</div>
<svg class="r" style="left:449px;top:95px;" width="16" height="16" viewBox="0 0 16 16"><rect x="0.5" y="0.5" width="15" height="15" fill="none" stroke="#aaa"/><path d="M0.5 4.5h15M0.5 11.5h15M5.5 0.5v4M10.5 0.5v4M5.5 11.5v4M10.5 11.5v4" stroke="#aaa"/><path d="M3 8h10M5 6l-2 2 2 2M11 6l2 2-2 2" fill="none" stroke="#aaa"/></svg>
<div class="t" style="left:468.00px;top:97.48px;font-size:12.5px;line-height:14.375px;color:#a6a6a6;transform:scaleX(0.9230);transform-origin:0 0;">Mesclar e Centralizar</div>
<svg class="r" style="left:586px;top:102px;" width="7" height="4" viewBox="0 0 7 4"><polygon points="0,0 7,0 3.5,4" fill="#444"/></svg>
<div class="r" style="left:657px;top:61px;width:131px;height:23px;background:#fcfcfc;border:1px solid #dadada;box-sizing:border-box;"></div>
<svg class="r" style="left:777px;top:71px;" width="7" height="4" viewBox="0 0 7 4"><polygon points="0,0 7,0 3.5,4" fill="#ccc"/></svg>
<svg class="r" style="left:659px;top:94px;" width="18" height="18" viewBox="0 0 18 18"><rect x="0.5" y="0.5" width="16" height="8" fill="#ddd" stroke="#aaa"/><circle cx="8.5" cy="4.5" r="2.5" fill="#aaa"/><ellipse cx="11" cy="10" rx="4" ry="1.6" fill="#ddd" stroke="#bbb"/><ellipse cx="8" cy="13" rx="4" ry="1.6" fill="#ddd" stroke="#bbb"/><ellipse cx="8" cy="16" rx="4" ry="1.6" fill="#ddd" stroke="#bbb"/></svg>
<svg class="r" style="left:681px;top:102px;" width="7" height="4" viewBox="0 0 7 4"><polygon points="0,0 7,0 3.5,4" fill="#444"/></svg>
<div class="t" style="left:696.00px;top:95.68px;font-size:15px;line-height:17.250px;color:#aaa;transform:scaleX(0.9747);transform-origin:0 0;">%</div>
<div class="t" style="left:717.00px;top:97.82px;font-size:10.5px;line-height:12.075px;color:#aaa;transform:scaleX(0.7991);transform-origin:0 0;">000</div>
<div class="r" style="left:739px;top:92px;width:1px;height:22px;background:#e1e1e1;"></div>
<div class="t" style="left:752.00px;top:94.21px;font-size:9px;line-height:10.350px;color:#aaa;transform:scaleX(1.3322);transform-origin:0 0;">,0</div>
<div class="t" style="left:750.00px;top:102.21px;font-size:9px;line-height:10.350px;color:#aaa;transform:scaleX(0.9591);transform-origin:0 0;">,00</div>
<svg class="r" style="left:745px;top:96px;" width="8" height="6" viewBox="0 0 8 6"><path d="M7 3H1M3 1L1 3l2 2" fill="none" stroke="#aaa"/></svg>
<div class="t" style="left:773.00px;top:94.21px;font-size:9px;line-height:10.350px;color:#aaa;transform:scaleX(0.9591);transform-origin:0 0;">,00</div>
<div class="t" style="left:776.00px;top:102.21px;font-size:9px;line-height:10.350px;color:#aaa;transform:scaleX(1.1990);transform-origin:0 0;">,0</div>
<svg class="r" style="left:768px;top:104px;" width="8" height="6" viewBox="0 0 8 6"><path d="M0 3h6M4 1l2 2-2 2" fill="none" stroke="#aaa"/></svg>
<svg class="r" style="left:821px;top:58px;" width="31" height="31" viewBox="0 0 31 31"><rect x="1" y="1" width="7" height="7" fill="#f4eef4" stroke="#b5b5b5" stroke-width="1"/><rect x="8" y="1" width="7" height="7" fill="#f4eef4" stroke="#b5b5b5" stroke-width="1"/><rect x="15" y="1" width="7" height="7" fill="#f4eef4" stroke="#b5b5b5" stroke-width="1"/><rect x="22" y="1" width="7" height="7" fill="#f4eef4" stroke="#b5b5b5" stroke-width="1"/><rect x="1" y="8" width="7" height="7" fill="#f4eef4" stroke="#b5b5b5" stroke-width="1"/><rect x="8" y="8" width="7" height="7" fill="#f4eef4" stroke="#b5b5b5" stroke-width="1"/><rect x="15" y="8" width="7" height="7" fill="#f4eef4" stroke="#b5b5b5" stroke-width="1"/><rect x="22" y="8" width="7" height="7" fill="#f4eef4" stroke="#b5b5b5" stroke-width="1"/><rect x="1" y="15" width="7" height="7" fill="#f4eef4" stroke="#b5b5b5" stroke-width="1"/><rect x="8" y="15" width="7" height="7" fill="#f4eef4" stroke="#b5b5b5" stroke-width="1"/><rect x="15" y="15" width="7" height="7" fill="#f4eef4" stroke="#b5b5b5" stroke-width="1"/><rect x="22" y="15" width="7" height="7" fill="#f4eef4" stroke="#b5b5b5" stroke-width="1"/><rect x="1" y="22" width="7" height="7" fill="#f4eef4" stroke="#b5b5b5" stroke-width="1"/><rect x="8" y="22" width="7" height="7" fill="#f4eef4" stroke="#b5b5b5" stroke-width="1"/><rect x="15" y="22" width="7" height="7" fill="#f4eef4" stroke="#b5b5b5" stroke-width="1"/><rect x="22" y="22" width="7" height="7" fill="#f4eef4" stroke="#b5b5b5" stroke-width="1"/><rect x="8" y="1" width="5" height="28" fill="#b0b0b0"/><rect x="8" y="8" width="12" height="6" fill="#b0b0b0"/><rect x="14.5" y="18.5" width="15" height="11" fill="#f4eef4" stroke="#aaa"/><text x="18" y="28" font-size="11" fill="#888" font-family="Liberation Sans">≠</text></svg>
<svg class="r" style="left:904px;top:58px;" width="30" height="31" viewBox="0 0 30 31"><rect x="0.5" y="2.5" width="6" height="6" fill="#f4eef4" stroke="#b5b5b5"/><rect x="6.5" y="2.5" width="6" height="6" fill="#f4eef4" stroke="#b5b5b5"/><rect x="12.5" y="2.5" width="6" height="6" fill="#f4eef4" stroke="#b5b5b5"/><rect x="18.5" y="2.5" width="6" height="6" fill="#f4eef4" stroke="#b5b5b5"/><rect x="0.5" y="8.5" width="6" height="6" fill="#f4eef4" stroke="#b5b5b5"/><rect x="6.5" y="8.5" width="6" height="6" fill="#e6e0e6" stroke="#b5b5b5"/><rect x="12.5" y="8.5" width="6" height="6" fill="#e6e0e6" stroke="#b5b5b5"/><rect x="18.5" y="8.5" width="6" height="6" fill="#e6e0e6" stroke="#b5b5b5"/><rect x="0.5" y="14.5" width="6" height="6" fill="#f4eef4" stroke="#b5b5b5"/><rect x="6.5" y="14.5" width="6" height="6" fill="#e6e0e6" stroke="#b5b5b5"/><rect x="12.5" y="14.5" width="6" height="6" fill="#e6e0e6" stroke="#b5b5b5"/><rect x="18.5" y="14.5" width="6" height="6" fill="#e6e0e6" stroke="#b5b5b5"/><rect x="0.5" y="20.5" width="6" height="6" fill="#f4eef4" stroke="#b5b5b5"/><rect x="6.5" y="20.5" width="6" height="6" fill="#e6e0e6" stroke="#b5b5b5"/><rect x="12.5" y="20.5" width="6" height="6" fill="#e6e0e6" stroke="#b5b5b5"/><rect x="18.5" y="20.5" width="6" height="6" fill="#e6e0e6" stroke="#b5b5b5"/><path d="M10 29 L16 22 L19 25 L13 30Z" fill="#aaa"/><path d="M18 21 L28 11 L28 16 L20 24Z" fill="#aaa"/><circle cx="15" cy="26" r="3" fill="#aaa"/></svg>
<svg class="r" style="left:975px;top:57px;" width="30" height="31" viewBox="0 0 30 31"><rect x="0.5" y="0.5" width="26" height="21" fill="#f4eef4" stroke="#b5b5b5"/><rect x="5" y="5" width="17" height="12" fill="#dcd6dc"/><path d="M5 0.5v21M22 0.5v21M0.5 5h26M0.5 17h26" stroke="#c0c0c0"/><path d="M10 29 L16 22 L19 25 L13 30Z" fill="#aaa"/><path d="M18 21 L28 11 L28 16 L20 24Z" fill="#aaa"/><circle cx="15" cy="26" r="3" fill="#aaa"/></svg>
<div class="t" style="left:804.00px;top:91.98px;font-size:12.5px;line-height:14.375px;color:#a6a6a6;transform:scaleX(0.9447);transform-origin:0 0;">Formatação</div>
<div class="t" style="left:799.00px;top:107.98px;font-size:12.5px;line-height:14.375px;color:#a6a6a6;transform:scaleX(0.9645);transform-origin:0 0;">Condicional</div>
<div class="t" style="left:876.00px;top:91.98px;font-size:12.5px;line-height:14.375px;color:#a6a6a6;transform:scaleX(0.9677);transform-origin:0 0;">Formatar como</div>
<div class="t" style="left:898.00px;top:107.98px;font-size:12.5px;line-height:14.375px;color:#a6a6a6;transform:scaleX(0.8688);transform-origin:0 0;">Tabela</div>
<div class="t" style="left:963.00px;top:91.98px;font-size:12.5px;line-height:14.375px;color:#a6a6a6;transform:scaleX(0.9042);transform-origin:0 0;">Estilos de</div>
<div class="t" style="left:967.00px;top:107.98px;font-size:12.5px;line-height:14.375px;color:#a6a6a6;transform:scaleX(0.9312);transform-origin:0 0;">Célula</div>
<svg class="r" style="left:867px;top:114px;" width="6" height="3" viewBox="0 0 6 3"><polygon points="0,0 6,0 3,3" fill="#c0c0c0"/></svg>
<svg class="r" style="left:933px;top:114px;" width="6" height="3" viewBox="0 0 6 3"><polygon points="0,0 6,0 3,3" fill="#c0c0c0"/></svg>
<svg class="r" style="left:1003px;top:114px;" width="6" height="3" viewBox="0 0 6 3"><polygon points="0,0 6,0 3,3" fill="#c0c0c0"/></svg>
<svg class="r" style="left:1032px;top:58px;" width="27" height="28" viewBox="0 0 27 28"><rect x="0.5" y="0.5" width="12" height="5" fill="#f4eef4" stroke="#aaa"/><rect x="12.5" y="0.5" width="0" height="0"/><rect x="9.5" y="9.5" width="16" height="5" fill="#ddd" stroke="#aaa"/><path d="M1 12h6M3 10l-2 2 2 2" fill="none" stroke="#999"/><rect x="0.5" y="17.5" width="12" height="9" fill="#f4eef4" stroke="#aaa"/><path d="M6.5 17.5v9M0.5 22h12" stroke="#aaa"/><path d="M6.5 0.5v5" stroke="#aaa"/></svg>
<svg class="r" style="left:1072px;top:58px;" width="30" height="28" viewBox="0 0 30 28"><rect x="0.5" y="0.5" width="12" height="5" fill="#f4eef4" stroke="#aaa"/><path d="M6.5 0.5v5" stroke="#aaa"/><rect x="4.5" y="9.5" width="14" height="5" fill="#ddd" stroke="#aaa"/><path d="M16 4l13 13M29 4L16 17" stroke="#aaa" stroke-width="2"/><rect x="0.5" y="17.5" width="12" height="9" fill="#f4eef4" stroke="#aaa"/><path d="M6.5 17.5v9M0.5 22h12" stroke="#aaa"/></svg>
<svg class="r" style="left:1119px;top:56px;" width="31" height="32" viewBox="0 0 31 32"><path d="M1 3h28M4 1l-3 2 3 2M26 1l3 2-3 2M0.5 0v6M29.5 0v6" fill="none" stroke="#2e75b6" stroke-width="1"/><rect x="0.5" y="8.5" width="7" height="6" fill="#fff" stroke="#777"/><rect x="7.5" y="8.5" width="7" height="6" fill="#fff" stroke="#777"/><rect x="14.5" y="8.5" width="7" height="6" fill="#fff" stroke="#777"/><rect x="21.5" y="8.5" width="7" height="6" fill="#fff" stroke="#777"/><rect x="0.5" y="14.5" width="7" height="6" fill="#fff" stroke="#777"/><rect x="7.5" y="14.5" width="7" height="6" fill="#fff" stroke="#777"/><rect x="14.5" y="14.5" width="7" height="6" fill="#fff" stroke="#777"/><rect x="21.5" y="14.5" width="7" height="6" fill="#fff" stroke="#777"/><rect x="0.5" y="20.5" width="7" height="6" fill="#fff" stroke="#777"/><rect x="7.5" y="20.5" width="7" height="6" fill="#fff" stroke="#777"/><rect x="14.5" y="20.5" width="7" height="6" fill="#fff" stroke="#777"/><rect x="21.5" y="20.5" width="7" height="6" fill="#fff" stroke="#777"/><rect x="8" y="13" width="6" height="10" fill="#2e75b6"/><path d="M3 28l2 3h6l2-3h6l2 3h6" fill="none" stroke="#777"/></svg>
<div class="t" style="left:1029.00px;top:91.98px;font-size:12.5px;line-height:14.375px;color:#444;transform:scaleX(0.9214);transform-origin:0 0;">Inserir</div>
<div class="t" style="left:1069.00px;top:91.98px;font-size:12.5px;line-height:14.375px;color:#444;transform:scaleX(0.9332);transform-origin:0 0;">Excluir</div>
<div class="t" style="left:1110.00px;top:91.98px;font-size:12.5px;line-height:14.375px;color:#444;transform:scaleX(0.9467);transform-origin:0 0;">Formatar</div>
<svg class="r" style="left:1041px;top:112px;" width="7" height="4" viewBox="0 0 7 4"><polygon points="0,0 7,0 3.5,4" fill="#555"/></svg>
<svg class="r" style="left:1083px;top:112px;" width="7" height="4" viewBox="0 0 7 4"><polygon points="0,0 7,0 3.5,4" fill="#555"/></svg>
<svg class="r" style="left:1131px;top:112px;" width="7" height="4" viewBox="0 0 7 4"><polygon points="0,0 7,0 3.5,4" fill="#555"/></svg>
<svg class="r" style="left:1172px;top:56px;" width="17" height="16" viewBox="0 0 17 16"><path d="M15 3V1H1l7 7-7 7h14v-2" fill="none" stroke="#777" stroke-width="2"/></svg>
<svg class="r" style="left:1194px;top:63px;" width="7" height="4" viewBox="0 0 7 4"><polygon points="0,0 7,0 3.5,4" fill="#555"/></svg>
<svg class="r" style="left:1173px;top:79px;" width="16" height="16" viewBox="0 0 16 16"><rect x="0.5" y="0.5" width="15" height="15" fill="#fff" stroke="#666"/><rect x="0.5" y="0.5" width="15" height="3" fill="#666"/><path d="M8 5v8M4.5 9.5L8 13l3.5-3.5" fill="none" stroke="#2e75b6" stroke-width="2"/></svg>
<svg class="r" style="left:1194px;top:86px;" width="7" height="4" viewBox="0 0 7 4"><polygon points="0,0 7,0 3.5,4" fill="#555"/></svg>
<svg class="r" style="left:1173px;top:102px;" width="17" height="16" viewBox="0 0 17 16"><path d="M1 10l7-7 6 6-5 5H5z" fill="#e0848a"/><path d="M4 15h13" stroke="#666" stroke-width="1.2"/></svg>
<svg class="r" style="left:1194px;top:110px;" width="7" height="4" viewBox="0 0 7 4"><polygon points="0,0 7,0 3.5,4" fill="#555"/></svg>
<svg class="r" style="left:1218px;top:57px;" width="32" height="30" viewBox="0 0 32 30"><text x="1" y="12" font-size="13" fill="#b5b5b5" font-family="Liberation Sans">A</text><text x="1" y="28" font-size="13" fill="#b5b5b5" font-family="Liberation Sans" font-weight="bold">Z</text><path d="M13 9h17l-6 7v7l-4 2v-9z" fill="#b5b5b5"/></svg>
<svg class="r" style="left:1283px;top:57px;" width="27" height="27" viewBox="0 0 27 27"><path d="M2 10l2-6h5l1 6v14H0V14z" fill="#555"/><path d="M25 10l-2-6h-5l-1 6v14h10V14z" fill="#555"/><rect x="9" y="10" width="9" height="7" fill="#555"/><rect x="4" y="1" width="5" height="4" fill="#555"/><rect x="18" y="1" width="5" height="4" fill="#555"/><path d="M2 15v8M25 15v8" stroke="#999" stroke-width="1"/></svg>
<div class="t" style="left:1208.00px;top:91.98px;font-size:12.5px;line-height:14.375px;color:#a6a6a6;transform:scaleX(0.9020);transform-origin:0 0;">Classificar</div>
<div class="t" style="left:1210.00px;top:107.98px;font-size:12.5px;line-height:14.375px;color:#a6a6a6;transform:scaleX(1.0150);transform-origin:0 0;">e Filtrar</div>
<svg class="r" style="left:1254px;top:114px;" width="6" height="3" viewBox="0 0 6 3"><polygon points="0,0 6,0 3,3" fill="#c0c0c0"/></svg>
<div class="t" style="left:1269.00px;top:91.98px;font-size:12.5px;line-height:14.375px;color:#444;transform:scaleX(0.9099);transform-origin:0 0;">Localizar e</div>
<div class="t" style="left:1265.00px;top:107.98px;font-size:12.5px;line-height:14.375px;color:#444;transform:scaleX(0.9651);transform-origin:0 0;">Selecionar</div>
<svg class="r" style="left:1323px;top:114px;" width="6" height="3" viewBox="0 0 6 3"><polygon points="0,0 6,0 3,3" fill="#555"/></svg>
<div class="r" style="left:5px;top:153px;width:102px;height:26px;background:#fff;border:1px solid #c6c6c6;box-sizing:border-box;"></div>
<div class="t" style="left:12.00px;top:159.48px;font-size:12.5px;line-height:14.375px;color:#444;transform:scaleX(0.9158);transform-origin:0 0;">C21</div>
<svg class="r" style="left:92px;top:163px;" width="8" height="4" viewBox="0 0 8 4"><polygon points="0,0 8,0 4,4" fill="#666"/></svg>
<div class="r" style="left:121px;top:160px;width:2px;height:2px;background:#999;"></div>
<div class="r" style="left:121px;top:164px;width:2px;height:2px;background:#999;"></div>
<div class="r" style="left:121px;top:168px;width:2px;height:2px;background:#999;"></div>
<div class="r" style="left:137px;top:153px;width:110px;height:26px;background:#fff;border:1px solid #c6c6c6;box-sizing:border-box;"></div>
<svg class="r" style="left:146px;top:158px;" width="18" height="17" viewBox="0 0 18 17"><path d="M2 2l13 13M15 2L2 15" stroke="#c6c6c6" stroke-width="2"/></svg>
<svg class="r" style="left:182px;top:159px;" width="20" height="16" viewBox="0 0 20 16"><path d="M1 8l6 6L19 2" fill="none" stroke="#c6c6c6" stroke-width="3"/></svg>
<div class="t" style="left:218.00px;top:154.99px;font-size:19px;line-height:21.850px;color:#555;font-style:italic;transform:scaleX(1.7049);transform-origin:0 0;font-family:"Liberation Serif",serif;font-weight:bold;">f</div>
<div class="t" style="left:227.00px;top:159.60px;font-size:14px;line-height:16.100px;color:#555;font-style:italic;transform:scaleX(1.4286);transform-origin:0 0;font-family:"Liberation Serif",serif;font-weight:bold;">x</div>
<div class="r" style="left:250px;top:153px;width:111px;height:26px;background:#fff;border:1px solid #c6c6c6;box-sizing:border-box;width:1111px;"></div>
<div class="t" style="left:262.00px;top:159.48px;font-size:12.5px;line-height:14.375px;color:#222;transform:scaleX(0.9350);transform-origin:0 0;">80</div>
<svg class="r" style="left:1345px;top:162px;" width="12" height="8" viewBox="0 0 12 8"><path d="M1.5 1.5l4.5 4.5 4.5-4.5" fill="none" stroke="#555" stroke-width="2.6"/></svg></body></html>
